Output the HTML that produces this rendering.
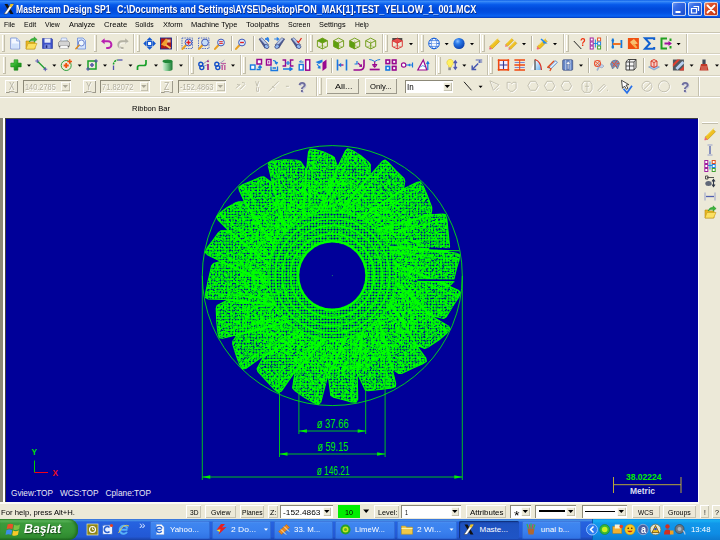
<!DOCTYPE html>
<html><head><meta charset="utf-8"><title>Mastercam Design SP1</title>
<style>
html,body{margin:0;padding:0;}
body{width:720px;height:540px;overflow:hidden;background:#ECE9D8;font-family:'Liberation Sans',sans-serif;position:relative;}
svg text{font-family:'Liberation Sans',sans-serif;}
</style></head><body>
<div style="position:absolute;left:0px;top:0px;width:720px;height:18px;background:linear-gradient(to bottom,#0A5CE6 0%,#3E8EF8 7%,#2277F5 14%,#0659EA 26%,#0049DA 50%,#0350E2 72%,#0A62F2 88%,#0856E4 94%,#0034B0 100%);"></div>
<div style="position:absolute;left:672px;top:2px;width:14px;height:14px;background:linear-gradient(135deg,#7FA8F8 0%,#3A6FE8 30%,#2458D8 70%,#1A48C0 100%);border-radius:2.5px;box-shadow:0 0 0 0.8px #E8EEFA inset;"></div>
<div style="position:absolute;left:688px;top:2px;width:14px;height:14px;background:linear-gradient(135deg,#7FA8F8 0%,#3A6FE8 30%,#2458D8 70%,#1A48C0 100%);border-radius:2.5px;box-shadow:0 0 0 0.8px #E8EEFA inset;"></div>
<div style="position:absolute;left:704px;top:2px;width:14px;height:14px;background:linear-gradient(135deg,#F0A080 0%,#E0542C 30%,#D0401C 70%,#B83010 100%);border-radius:2.5px;box-shadow:0 0 0 0.8px #E8EEFA inset;"></div>
<div style="position:absolute;left:0px;top:18px;width:720px;height:14px;background:#ECE9D8;"></div>
<div style="position:absolute;left:0px;top:32px;width:720px;height:1px;background:#C9C5B2;"></div>
<div style="position:absolute;left:0px;top:33px;width:720px;height:1px;background:#FFFFFF;"></div>
<div style="position:absolute;left:0px;top:53px;width:720px;height:1px;background:#D5D1BF;"></div>
<div style="position:absolute;left:0px;top:54px;width:720px;height:1px;background:#FFFFFF;"></div>
<div style="position:absolute;left:0px;top:75px;width:720px;height:1px;background:#D5D1BF;"></div>
<div style="position:absolute;left:0px;top:76px;width:720px;height:1px;background:#FFFFFF;"></div>
<div style="position:absolute;left:0px;top:96px;width:720px;height:1px;background:#D5D1BF;"></div>
<div style="position:absolute;left:0px;top:97px;width:720px;height:1px;background:#FFFFFF;"></div>
<div style="position:absolute;left:5px;top:80px;width:13px;height:12.5px;background:#ECE9D8;box-shadow:inset 1px 1px 0 #FFFFFF, inset -1px -1px 0 #9D9A8C, 0 0 0 0px #000;"></div>
<div style="position:absolute;left:23px;top:80px;width:48px;height:12.5px;background:#ECE9D8;box-shadow:inset 1px 1px 0 #8C8978, inset -1px -1px 0 #FFFFFF;"></div>
<div style="position:absolute;left:61px;top:81.5px;width:8.5px;height:9.5px;background:#ECE9D8;box-shadow:inset 0.8px 0.8px 0 #FFFFFF, inset -0.8px -0.8px 0 #B8B5A4;"></div>
<div style="position:absolute;left:82.5px;top:80px;width:13.200000000000003px;height:12.5px;background:#ECE9D8;box-shadow:inset 1px 1px 0 #FFFFFF, inset -1px -1px 0 #9D9A8C, 0 0 0 0px #000;"></div>
<div style="position:absolute;left:100px;top:80px;width:49.5px;height:12.5px;background:#ECE9D8;box-shadow:inset 1px 1px 0 #8C8978, inset -1px -1px 0 #FFFFFF;"></div>
<div style="position:absolute;left:139.5px;top:81.5px;width:8.5px;height:9.5px;background:#ECE9D8;box-shadow:inset 0.8px 0.8px 0 #FFFFFF, inset -0.8px -0.8px 0 #B8B5A4;"></div>
<div style="position:absolute;left:160px;top:80px;width:13px;height:12.5px;background:#ECE9D8;box-shadow:inset 1px 1px 0 #FFFFFF, inset -1px -1px 0 #9D9A8C, 0 0 0 0px #000;"></div>
<div style="position:absolute;left:177.5px;top:80px;width:48.5px;height:12.5px;background:#ECE9D8;box-shadow:inset 1px 1px 0 #8C8978, inset -1px -1px 0 #FFFFFF;"></div>
<div style="position:absolute;left:216px;top:81.5px;width:8.5px;height:9.5px;background:#ECE9D8;box-shadow:inset 0.8px 0.8px 0 #FFFFFF, inset -0.8px -0.8px 0 #B8B5A4;"></div>
<div style="position:absolute;left:326px;top:78px;width:33px;height:16px;background:#ECE9D8;box-shadow:inset 1px 1px 0 #FFFFFF, inset -1px -1px 0 #9D9A8C, 0 0 0 0px #000;"></div>
<div style="position:absolute;left:364.5px;top:78px;width:32.5px;height:16px;background:#ECE9D8;box-shadow:inset 1px 1px 0 #FFFFFF, inset -1px -1px 0 #9D9A8C, 0 0 0 0px #000;"></div>
<div style="position:absolute;left:404.5px;top:80px;width:48.5px;height:12.5px;background:#fff;box-shadow:inset 1px 1px 0 #8C8978, inset -1px -1px 0 #FFFFFF;"></div>
<div style="position:absolute;left:443px;top:81.5px;width:8.5px;height:9.5px;background:#ECE9D8;box-shadow:inset 0.8px 0.8px 0 #FFFFFF, inset -0.8px -0.8px 0 #B8B5A4;"></div>
<div style="position:absolute;left:0px;top:118px;width:3px;height:384px;background:#8A8776;"></div>
<div style="position:absolute;left:3px;top:118px;width:3px;height:384px;background:#FFFFFF;"></div>
<div style="position:absolute;left:5px;top:118px;width:694px;height:384.5px;background:#404040;"></div>
<div style="position:absolute;left:6px;top:119px;width:692px;height:383px;background:#000099;"></div>
<div style="position:absolute;left:698px;top:118px;width:1px;height:384px;background:#FFFFFF;"></div>
<div style="position:absolute;left:702px;top:122px;width:16px;height:1px;background:#FFFFFF;"></div>
<div style="position:absolute;left:702px;top:123px;width:16px;height:1px;background:#C2BEAB;"></div>
<div style="position:absolute;left:0px;top:502px;width:720px;height:17px;background:#ECE9D8;"></div>
<div style="position:absolute;left:0px;top:502px;width:699px;height:2px;background:#FBFAF4;"></div>
<div style="position:absolute;left:186px;top:505px;width:15px;height:12.5px;background:#ECE9D8;box-shadow:inset 1px 1px 0 #FFFFFF, inset -1px -1px 0 #C5C2B0;"></div>
<div style="position:absolute;left:205px;top:505px;width:31px;height:12.5px;background:#ECE9D8;box-shadow:inset 1px 1px 0 #FFFFFF, inset -1px -1px 0 #C5C2B0;"></div>
<div style="position:absolute;left:239.5px;top:505px;width:24.5px;height:12.5px;background:#ECE9D8;box-shadow:inset 1px 1px 0 #FFFFFF, inset -1px -1px 0 #C5C2B0;"></div>
<div style="position:absolute;left:267.5px;top:505px;width:10.5px;height:12.5px;background:#ECE9D8;box-shadow:inset 1px 1px 0 #FFFFFF, inset -1px -1px 0 #C5C2B0;"></div>
<div style="position:absolute;left:280px;top:505px;width:52.5px;height:12.5px;background:#fff;box-shadow:inset 1px 1px 0 #8C8978, inset -1px -1px 0 #FFFFFF;"></div>
<div style="position:absolute;left:322.5px;top:506.5px;width:8.5px;height:9.5px;background:#ECE9D8;box-shadow:inset 0.8px 0.8px 0 #FFFFFF, inset -0.8px -0.8px 0 #B8B5A4;"></div>
<div style="position:absolute;left:338px;top:505px;width:22px;height:12.5px;background:#00EE00;"></div>
<div style="position:absolute;left:373.7px;top:505px;width:25.80000000000001px;height:12.5px;background:#ECE9D8;box-shadow:inset 1px 1px 0 #FFFFFF, inset -1px -1px 0 #C5C2B0;"></div>
<div style="position:absolute;left:401px;top:505px;width:59.5px;height:12.5px;background:#fff;box-shadow:inset 1px 1px 0 #8C8978, inset -1px -1px 0 #FFFFFF;"></div>
<div style="position:absolute;left:450.5px;top:506.5px;width:8.5px;height:9.5px;background:#ECE9D8;box-shadow:inset 0.8px 0.8px 0 #FFFFFF, inset -0.8px -0.8px 0 #B8B5A4;"></div>
<div style="position:absolute;left:465.7px;top:505px;width:40.30000000000001px;height:12.5px;background:#ECE9D8;box-shadow:inset 1px 1px 0 #FFFFFF, inset -1px -1px 0 #C5C2B0;"></div>
<div style="position:absolute;left:510px;top:505px;width:21px;height:12.5px;background:#fff;box-shadow:inset 1px 1px 0 #8C8978, inset -1px -1px 0 #FFFFFF;"></div>
<div style="position:absolute;left:521px;top:506.5px;width:8.5px;height:9.5px;background:#ECE9D8;box-shadow:inset 0.8px 0.8px 0 #FFFFFF, inset -0.8px -0.8px 0 #B8B5A4;"></div>
<div style="position:absolute;left:535.3px;top:505px;width:41.10000000000002px;height:12.5px;background:#fff;box-shadow:inset 1px 1px 0 #8C8978, inset -1px -1px 0 #FFFFFF;"></div>
<div style="position:absolute;left:566.4px;top:506.5px;width:8.5px;height:9.5px;background:#ECE9D8;box-shadow:inset 0.8px 0.8px 0 #FFFFFF, inset -0.8px -0.8px 0 #B8B5A4;"></div>
<div style="position:absolute;left:538.5px;top:510.3px;width:26px;height:1.8px;background:#000;"></div>
<div style="position:absolute;left:581.7px;top:505px;width:45.299999999999955px;height:12.5px;background:#fff;box-shadow:inset 1px 1px 0 #8C8978, inset -1px -1px 0 #FFFFFF;"></div>
<div style="position:absolute;left:617px;top:506.5px;width:8.5px;height:9.5px;background:#ECE9D8;box-shadow:inset 0.8px 0.8px 0 #FFFFFF, inset -0.8px -0.8px 0 #B8B5A4;"></div>
<div style="position:absolute;left:585px;top:511px;width:30px;height:0.8px;background:#000;"></div>
<div style="position:absolute;left:632px;top:505px;width:27.700000000000045px;height:12.5px;background:#ECE9D8;box-shadow:inset 1px 1px 0 #FFFFFF, inset -1px -1px 0 #C5C2B0;"></div>
<div style="position:absolute;left:662.5px;top:505px;width:33.89999999999998px;height:12.5px;background:#ECE9D8;box-shadow:inset 1px 1px 0 #FFFFFF, inset -1px -1px 0 #C5C2B0;"></div>
<div style="position:absolute;left:700px;top:505px;width:9px;height:12.5px;background:#ECE9D8;box-shadow:inset 1px 1px 0 #FFFFFF, inset -1px -1px 0 #C5C2B0;"></div>
<div style="position:absolute;left:711.7px;top:505px;width:9.299999999999955px;height:12.5px;background:#ECE9D8;box-shadow:inset 1px 1px 0 #FFFFFF, inset -1px -1px 0 #C5C2B0;"></div>
<div style="position:absolute;left:0px;top:518.5px;width:720px;height:21.5px;background:linear-gradient(to bottom,#3168D5 0%,#4993E6 6%,#2663E0 14%,#245DDB 50%,#2258D4 85%,#1941A5 100%);"></div>
<div style="position:absolute;left:0px;top:518.5px;width:77.5px;height:21.5px;background:linear-gradient(to bottom,#2E8A2E 0%,#5CB85C 8%,#3C9A3C 20%,#379637 60%,#2F8A2F 88%,#1F6A1F 100%);border-radius:0 9px 9px 0;box-shadow:inset -2px 0 3px #1F6A1F;"></div>
<div style="position:absolute;left:150px;top:521px;width:60px;height:17.5px;background:linear-gradient(to bottom,#5A9CF5 0%,#3F86F0 12%,#3A80EE 60%,#2F72E4 100%);border-radius:2px;box-shadow:inset 0 0 0 0.6px #2A5FC8;"></div>
<div style="position:absolute;left:212px;top:521px;width:59px;height:17.5px;background:linear-gradient(to bottom,#5A9CF5 0%,#3F86F0 12%,#3A80EE 60%,#2F72E4 100%);border-radius:2px;box-shadow:inset 0 0 0 0.6px #2A5FC8;"></div>
<div style="position:absolute;left:273.7px;top:521px;width:59.30000000000001px;height:17.5px;background:linear-gradient(to bottom,#5A9CF5 0%,#3F86F0 12%,#3A80EE 60%,#2F72E4 100%);border-radius:2px;box-shadow:inset 0 0 0 0.6px #2A5FC8;"></div>
<div style="position:absolute;left:335px;top:521px;width:60px;height:17.5px;background:linear-gradient(to bottom,#5A9CF5 0%,#3F86F0 12%,#3A80EE 60%,#2F72E4 100%);border-radius:2px;box-shadow:inset 0 0 0 0.6px #2A5FC8;"></div>
<div style="position:absolute;left:397px;top:521px;width:60px;height:17.5px;background:linear-gradient(to bottom,#5A9CF5 0%,#3F86F0 12%,#3A80EE 60%,#2F72E4 100%);border-radius:2px;box-shadow:inset 0 0 0 0.6px #2A5FC8;"></div>
<div style="position:absolute;left:458.7px;top:521px;width:60.80000000000001px;height:17.5px;background:linear-gradient(to bottom,#1A49B0 0%,#1E52C0 20%,#1F55C6 100%);border-radius:2px;box-shadow:inset 1px 1px 1px #10307A;"></div>
<div style="position:absolute;left:521.5px;top:521px;width:59.5px;height:17.5px;background:linear-gradient(to bottom,#5A9CF5 0%,#3F86F0 12%,#3A80EE 60%,#2F72E4 100%);border-radius:2px;box-shadow:inset 0 0 0 0.6px #2A5FC8;"></div>
<div style="position:absolute;left:592px;top:518.5px;width:128px;height:21.5px;background:linear-gradient(to bottom,#1290E8 0%,#19B0F2 8%,#1198EA 20%,#0E8CE4 70%,#0C7AD0 100%);box-shadow:inset 1px 0 0 #0A5CB0;"></div>
<div style="position:absolute;left:2px;top:35px;width:1px;height:16px;background:#FFFFFF;"></div>
<div style="position:absolute;left:4px;top:35px;width:1px;height:16px;background:#C2BEAB;"></div>
<div style="position:absolute;left:2px;top:51px;width:3px;height:1px;background:#C2BEAB;"></div>
<div style="position:absolute;left:93.5px;top:35px;width:1px;height:16px;background:#FFFFFF;"></div>
<div style="position:absolute;left:95.5px;top:35px;width:1px;height:16px;background:#C2BEAB;"></div>
<div style="position:absolute;left:93.5px;top:51px;width:3px;height:1px;background:#C2BEAB;"></div>
<div style="position:absolute;left:133px;top:34px;width:1px;height:19px;background:#C5C1AE;"></div>
<div style="position:absolute;left:134px;top:34px;width:1px;height:19px;background:#FFFFFF;"></div>
<div style="position:absolute;left:137px;top:35px;width:1px;height:16px;background:#FFFFFF;"></div>
<div style="position:absolute;left:139px;top:35px;width:1px;height:16px;background:#C2BEAB;"></div>
<div style="position:absolute;left:137px;top:51px;width:3px;height:1px;background:#C2BEAB;"></div>
<div style="position:absolute;left:176px;top:36px;width:1px;height:15px;background:#B8B4A2;"></div>
<div style="position:absolute;left:177px;top:36px;width:1px;height:15px;background:#FFFFFF;"></div>
<div style="position:absolute;left:230.5px;top:36px;width:1px;height:15px;background:#B8B4A2;"></div>
<div style="position:absolute;left:231.5px;top:36px;width:1px;height:15px;background:#FFFFFF;"></div>
<div style="position:absolute;left:252.5px;top:36px;width:1px;height:15px;background:#B8B4A2;"></div>
<div style="position:absolute;left:253.5px;top:36px;width:1px;height:15px;background:#FFFFFF;"></div>
<div style="position:absolute;left:306px;top:34px;width:1px;height:19px;background:#C5C1AE;"></div>
<div style="position:absolute;left:307px;top:34px;width:1px;height:19px;background:#FFFFFF;"></div>
<div style="position:absolute;left:309.5px;top:35px;width:1px;height:16px;background:#FFFFFF;"></div>
<div style="position:absolute;left:311.5px;top:35px;width:1px;height:16px;background:#C2BEAB;"></div>
<div style="position:absolute;left:309.5px;top:51px;width:3px;height:1px;background:#C2BEAB;"></div>
<div style="position:absolute;left:382px;top:34px;width:1px;height:19px;background:#C5C1AE;"></div>
<div style="position:absolute;left:383px;top:34px;width:1px;height:19px;background:#FFFFFF;"></div>
<div style="position:absolute;left:385px;top:35px;width:1px;height:16px;background:#FFFFFF;"></div>
<div style="position:absolute;left:387px;top:35px;width:1px;height:16px;background:#C2BEAB;"></div>
<div style="position:absolute;left:385px;top:51px;width:3px;height:1px;background:#C2BEAB;"></div>
<div style="position:absolute;left:417px;top:34px;width:1px;height:19px;background:#C5C1AE;"></div>
<div style="position:absolute;left:418px;top:34px;width:1px;height:19px;background:#FFFFFF;"></div>
<div style="position:absolute;left:420.5px;top:35px;width:1px;height:16px;background:#FFFFFF;"></div>
<div style="position:absolute;left:422.5px;top:35px;width:1px;height:16px;background:#C2BEAB;"></div>
<div style="position:absolute;left:420.5px;top:51px;width:3px;height:1px;background:#C2BEAB;"></div>
<div style="position:absolute;left:479px;top:34px;width:1px;height:19px;background:#C5C1AE;"></div>
<div style="position:absolute;left:480px;top:34px;width:1px;height:19px;background:#FFFFFF;"></div>
<div style="position:absolute;left:482px;top:35px;width:1px;height:16px;background:#FFFFFF;"></div>
<div style="position:absolute;left:484px;top:35px;width:1px;height:16px;background:#C2BEAB;"></div>
<div style="position:absolute;left:482px;top:51px;width:3px;height:1px;background:#C2BEAB;"></div>
<div style="position:absolute;left:531px;top:36px;width:1px;height:15px;background:#B8B4A2;"></div>
<div style="position:absolute;left:532px;top:36px;width:1px;height:15px;background:#FFFFFF;"></div>
<div style="position:absolute;left:562.5px;top:34px;width:1px;height:19px;background:#C5C1AE;"></div>
<div style="position:absolute;left:563.5px;top:34px;width:1px;height:19px;background:#FFFFFF;"></div>
<div style="position:absolute;left:566px;top:35px;width:1px;height:16px;background:#FFFFFF;"></div>
<div style="position:absolute;left:568px;top:35px;width:1px;height:16px;background:#C2BEAB;"></div>
<div style="position:absolute;left:566px;top:51px;width:3px;height:1px;background:#C2BEAB;"></div>
<div style="position:absolute;left:606px;top:36px;width:1px;height:15px;background:#B8B4A2;"></div>
<div style="position:absolute;left:607px;top:36px;width:1px;height:15px;background:#FFFFFF;"></div>
<div style="position:absolute;left:685.5px;top:34px;width:1px;height:19px;background:#C5C1AE;"></div>
<div style="position:absolute;left:686.5px;top:34px;width:1px;height:19px;background:#FFFFFF;"></div>
<div style="position:absolute;left:2.5px;top:56.5px;width:1px;height:16px;background:#FFFFFF;"></div>
<div style="position:absolute;left:4.5px;top:56.5px;width:1px;height:16px;background:#C2BEAB;"></div>
<div style="position:absolute;left:2.5px;top:72.5px;width:3px;height:1px;background:#C2BEAB;"></div>
<div style="position:absolute;left:187.5px;top:55px;width:1px;height:20px;background:#C5C1AE;"></div>
<div style="position:absolute;left:188.5px;top:55px;width:1px;height:20px;background:#FFFFFF;"></div>
<div style="position:absolute;left:190.5px;top:56.5px;width:1px;height:16px;background:#FFFFFF;"></div>
<div style="position:absolute;left:192.5px;top:56.5px;width:1px;height:16px;background:#C2BEAB;"></div>
<div style="position:absolute;left:190.5px;top:72.5px;width:3px;height:1px;background:#C2BEAB;"></div>
<div style="position:absolute;left:239.5px;top:55px;width:1px;height:20px;background:#C5C1AE;"></div>
<div style="position:absolute;left:240.5px;top:55px;width:1px;height:20px;background:#FFFFFF;"></div>
<div style="position:absolute;left:242.5px;top:56.5px;width:1px;height:16px;background:#FFFFFF;"></div>
<div style="position:absolute;left:244.5px;top:56.5px;width:1px;height:16px;background:#C2BEAB;"></div>
<div style="position:absolute;left:242.5px;top:72.5px;width:3px;height:1px;background:#C2BEAB;"></div>
<div style="position:absolute;left:331px;top:57.5px;width:1px;height:15px;background:#B8B4A2;"></div>
<div style="position:absolute;left:332px;top:57.5px;width:1px;height:15px;background:#FFFFFF;"></div>
<div style="position:absolute;left:435px;top:55px;width:1px;height:20px;background:#C5C1AE;"></div>
<div style="position:absolute;left:436px;top:55px;width:1px;height:20px;background:#FFFFFF;"></div>
<div style="position:absolute;left:438px;top:56.5px;width:1px;height:16px;background:#FFFFFF;"></div>
<div style="position:absolute;left:440px;top:56.5px;width:1px;height:16px;background:#C2BEAB;"></div>
<div style="position:absolute;left:438px;top:72.5px;width:3px;height:1px;background:#C2BEAB;"></div>
<div style="position:absolute;left:487px;top:55px;width:1px;height:20px;background:#C5C1AE;"></div>
<div style="position:absolute;left:488px;top:55px;width:1px;height:20px;background:#FFFFFF;"></div>
<div style="position:absolute;left:490px;top:56.5px;width:1px;height:16px;background:#FFFFFF;"></div>
<div style="position:absolute;left:492px;top:56.5px;width:1px;height:16px;background:#C2BEAB;"></div>
<div style="position:absolute;left:490px;top:72.5px;width:3px;height:1px;background:#C2BEAB;"></div>
<div style="position:absolute;left:588px;top:57.5px;width:1px;height:15px;background:#B8B4A2;"></div>
<div style="position:absolute;left:589px;top:57.5px;width:1px;height:15px;background:#FFFFFF;"></div>
<div style="position:absolute;left:642.5px;top:57.5px;width:1px;height:15px;background:#B8B4A2;"></div>
<div style="position:absolute;left:643.5px;top:57.5px;width:1px;height:15px;background:#FFFFFF;"></div>
<div style="position:absolute;left:316px;top:77px;width:1px;height:19px;background:#C5C1AE;"></div>
<div style="position:absolute;left:317px;top:77px;width:1px;height:19px;background:#FFFFFF;"></div>
<div style="position:absolute;left:319px;top:78px;width:1px;height:16px;background:#FFFFFF;"></div>
<div style="position:absolute;left:321px;top:78px;width:1px;height:16px;background:#C2BEAB;"></div>
<div style="position:absolute;left:319px;top:94px;width:3px;height:1px;background:#C2BEAB;"></div>
<div style="position:absolute;left:698px;top:77px;width:1px;height:19px;background:#C5C1AE;"></div>
<div style="position:absolute;left:699px;top:77px;width:1px;height:19px;background:#FFFFFF;"></div>
<svg style="position:absolute;left:0;top:0" width="720" height="540" viewBox="0 0 720 540">
<g transform="translate(3,3)"><path d="M1.5 1 L4.5 1 L10.5 11 L7.5 11 Z" fill="#111"/><path d="M8 1 L11 1 L4 11 L1 11 Z" fill="#fff" stroke="#333" stroke-width="0.5"/><path d="M7.5 1 L10.5 1 L8.2 4.5 L6.5 3 Z" fill="#E8C020"/></g>
<rect x="675.5" y="11" width="5" height="2" fill="#fff"/>
<path d="M693.5 6.5 h5 v4.5 M691.5 8.5 h5 v4.5 h-5 z" fill="none" stroke="#fff" stroke-width="1.2"/>
<path d="M707.5 5.5 l7 7 M714.5 5.5 l-7 7" stroke="#fff" stroke-width="1.8" stroke-linecap="round"/>
<path d="M62.6 85.05 h5.4 l-2.7 3 z" fill="#A8A596"/>
<path d="M141.1 85.05 h5.4 l-2.7 3 z" fill="#A8A596"/>
<path d="M217.6 85.05 h5.4 l-2.7 3 z" fill="#A8A596"/>
<path d="M444.6 85.05 h5.4 l-2.7 3 z" fill="#000"/>
<path d="M324.1 510.05 h5.4 l-2.7 3 z" fill="#000"/>
<path d="M363.2 509.5 h6 l-3 3.4 z" fill="#000"/>
<path d="M452.1 510.05 h5.4 l-2.7 3 z" fill="#000"/>
<path d="M522.6 510.05 h5.4 l-2.7 3 z" fill="#000"/>
<path d="M568.0 510.05 h5.4 l-2.7 3 z" fill="#000"/>
<path d="M618.6 510.05 h5.4 l-2.7 3 z" fill="#000"/>
<g transform="translate(7,522.8) scale(1.15)"><path d="M0.5 1.5 q2.5 -1.5 5 0 l-0.8 4 q-2.5 -1.3 -5 0z" fill="#E8502A"/><path d="M6.3 1.8 q2.5 1.2 5 -0.3 l-0.8 4 q-2.5 1.5 -5 0.3z" fill="#7CC242"/><path d="M-0.5 6.5 q2.5 -1.5 5 0 l-0.8 4 q-2.5 -1.3 -5 0z" fill="#3C8DE8"/><path d="M5.3 6.8 q2.5 1.2 5 -0.3 l-0.8 4 q-2.5 1.5 -5 0.3z" fill="#F8C828"/></g>
<defs>
<pattern id="m1" width="3" height="3" patternUnits="userSpaceOnUse"><rect width="3" height="3" fill="#00FF00"/><circle cx="1.5" cy="1.5" r="1.08" fill="#000099" fill-opacity="0.9"/></pattern>
<pattern id="m2" width="3" height="3" patternUnits="userSpaceOnUse"><rect width="3" height="3" fill="#00FF00"/><circle cx="1.5" cy="1.5" r="1.05" fill="#000099"/></pattern>
<pattern id="m3" width="3" height="3" patternUnits="userSpaceOnUse" patternTransform="rotate(30)"><rect width="3" height="3" fill="#00FF00"/><circle cx="1.5" cy="1.5" r="0.6" fill="#000099"/></pattern>
<pattern id="m4" width="3.7" height="3.7" patternUnits="userSpaceOnUse" patternTransform="rotate(23)"><circle cx="1.8" cy="1.8" r="1.0" fill="#00FF00"/></pattern>
<filter id="gn" filterUnits="userSpaceOnUse" x="195" y="138" width="280" height="280" color-interpolation-filters="sRGB">
<feTurbulence type="fractalNoise" baseFrequency="0.42" numOctaves="2" seed="4" result="n"/>
<feColorMatrix in="n" type="matrix" values="0 0 0 0 0  0 0 0 0 1  0 0 0 0 0  9 0 0 0 -4.3" result="g"/>
<feComposite in="g" in2="SourceAlpha" operator="in"/>
</filter>
<filter id="gn3" filterUnits="userSpaceOnUse" x="195" y="138" width="280" height="280" color-interpolation-filters="sRGB">
<feTurbulence type="fractalNoise" baseFrequency="0.36" numOctaves="2" seed="21" result="n"/>
<feColorMatrix in="n" type="matrix" values="0 0 0 0 0  0 0 0 0 1  0 0 0 0 0  0 0 9 0 -4.6" result="g"/>
<feComposite in="g" in2="SourceAlpha" operator="in"/>
</filter>
<filter id="gn2" filterUnits="userSpaceOnUse" x="195" y="138" width="280" height="280" color-interpolation-filters="sRGB">
<feTurbulence type="fractalNoise" baseFrequency="0.5" numOctaves="2" seed="9" result="n"/>
<feColorMatrix in="n" type="matrix" values="0 0 0 0 0  0 0 0 0 1  0 0 0 0 0  0 9 0 0 -4.9" result="g"/>
<feComposite in="g" in2="SourceAlpha" operator="in"/>
</filter>
<filter id="bn" filterUnits="userSpaceOnUse" x="195" y="138" width="280" height="280" color-interpolation-filters="sRGB">
<feTurbulence type="fractalNoise" baseFrequency="0.47" numOctaves="2" seed="11" result="n"/>
<feColorMatrix in="n" type="matrix" values="0 0 0 0 0  0 0 0 0 0  0 0 0 0 0.6  10 0 0 0 -6.4" result="g"/>
<feComposite in="g" in2="SourceAlpha" operator="in"/>
</filter>
<pattern id="m5" width="3" height="3" patternUnits="userSpaceOnUse"><circle cx="1.5" cy="1.5" r="0.62" fill="#000099"/></pattern>
<clipPath id="cv"><rect x="6" y="119" width="692" height="383"/></clipPath>
</defs>
<g clip-path="url(#cv)">
<path d="M430.9 214.7 L431.7 210.3 L431.7 207.3 L427.2 195.5 L423.2 186.0 L420.3 181.9 L417.2 182.3 L403.4 189.1 L404.8 181.4 L403.9 178.5 L395.8 170.7 L388.9 163.0 L385.0 160.0 L382.1 161.5 L370.2 175.3 L370.3 164.6 L368.5 162.2 L360.5 155.5 L352.4 150.4 L347.7 148.7 L345.4 151.0 L337.7 167.1 L334.2 157.5 L331.7 155.8 L323.7 152.0 L315.0 149.5 L310.0 149.2 L308.5 152.1 L306.5 170.4 L300.4 161.4 L297.5 160.4 L284.6 159.7 L273.7 161.0 L268.8 162.5 L268.3 165.7 L272.5 183.3 L264.0 176.9 L260.9 177.0 L251.7 181.0 L243.0 184.4 L238.8 187.2 L239.3 190.3 L244.5 201.9 L239.0 201.7 L236.2 202.6 L226.9 207.8 L219.8 213.0 L216.6 216.9 L218.0 219.8 L228.7 230.5 L221.0 230.8 L218.5 232.6 L212.6 240.7 L207.3 247.7 L205.3 252.3 L207.4 254.7 L221.2 261.4 L213.5 263.5 L211.6 265.9 L208.1 281.1 L205.7 292.5 L205.5 297.5 L208.3 299.0 L229.0 299.6 L217.1 305.6 L216.2 308.5 L216.8 322.2 L217.9 332.9 L219.3 337.7 L222.5 338.2 L237.2 334.8 L232.8 341.2 L232.8 344.3 L236.4 355.9 L239.7 364.7 L242.5 368.9 L245.7 368.5 L264.1 355.4 L257.1 368.8 L258.0 371.7 L267.2 381.5 L274.5 389.5 L278.5 392.5 L281.4 391.1 L295.2 371.3 L292.6 387.8 L294.4 390.2 L304.7 397.6 L313.8 402.8 L318.5 404.4 L320.8 402.1 L328.1 374.1 L330.8 395.4 L333.4 397.1 L342.5 399.5 L351.2 401.9 L356.2 402.1 L357.7 399.2 L357.2 373.1 L365.3 389.9 L368.2 390.8 L380.0 389.4 L390.5 388.3 L395.2 386.8 L395.7 383.7 L392.2 369.1 L398.5 373.4 L401.5 373.4 L413.2 368.0 L422.3 364.1 L426.4 361.2 L425.8 358.1 L415.9 344.7 L424.5 348.4 L427.4 347.5 L439.5 339.5 L446.9 333.0 L450.0 329.0 L448.5 326.1 L430.5 315.4 L443.9 318.4 L446.3 316.7 L453.6 304.8 L458.7 297.2 L460.4 292.5 L458.2 290.2 L448.8 286.1 L451.5 284.1 L453.3 281.7 L456.5 268.4 L459.1 259.8 L459.4 254.8 L456.6 253.2 L447.9 251.8 L448.5 249.4 L449.6 246.6 L447.9 230.1 L446.9 219.5 L445.5 214.6 L442.4 214.1 Z" fill="url(#m1)" stroke="#00FF00" stroke-width="1.1" stroke-linejoin="round"/>
<path d="M430.9 214.7 L431.7 210.3 L431.7 207.3 L427.2 195.5 L423.2 186.0 L420.3 181.9 L417.2 182.3 L403.4 189.1 L404.8 181.4 L403.9 178.5 L395.8 170.7 L388.9 163.0 L385.0 160.0 L382.1 161.5 L370.2 175.3 L370.3 164.6 L368.5 162.2 L360.5 155.5 L352.4 150.4 L347.7 148.7 L345.4 151.0 L337.7 167.1 L334.2 157.5 L331.7 155.8 L323.7 152.0 L315.0 149.5 L310.0 149.2 L308.5 152.1 L306.5 170.4 L300.4 161.4 L297.5 160.4 L284.6 159.7 L273.7 161.0 L268.8 162.5 L268.3 165.7 L272.5 183.3 L264.0 176.9 L260.9 177.0 L251.7 181.0 L243.0 184.4 L238.8 187.2 L239.3 190.3 L244.5 201.9 L239.0 201.7 L236.2 202.6 L226.9 207.8 L219.8 213.0 L216.6 216.9 L218.0 219.8 L228.7 230.5 L221.0 230.8 L218.5 232.6 L212.6 240.7 L207.3 247.7 L205.3 252.3 L207.4 254.7 L221.2 261.4 L213.5 263.5 L211.6 265.9 L208.1 281.1 L205.7 292.5 L205.5 297.5 L208.3 299.0 L229.0 299.6 L217.1 305.6 L216.2 308.5 L216.8 322.2 L217.9 332.9 L219.3 337.7 L222.5 338.2 L237.2 334.8 L232.8 341.2 L232.8 344.3 L236.4 355.9 L239.7 364.7 L242.5 368.9 L245.7 368.5 L264.1 355.4 L257.1 368.8 L258.0 371.7 L267.2 381.5 L274.5 389.5 L278.5 392.5 L281.4 391.1 L295.2 371.3 L292.6 387.8 L294.4 390.2 L304.7 397.6 L313.8 402.8 L318.5 404.4 L320.8 402.1 L328.1 374.1 L330.8 395.4 L333.4 397.1 L342.5 399.5 L351.2 401.9 L356.2 402.1 L357.7 399.2 L357.2 373.1 L365.3 389.9 L368.2 390.8 L380.0 389.4 L390.5 388.3 L395.2 386.8 L395.7 383.7 L392.2 369.1 L398.5 373.4 L401.5 373.4 L413.2 368.0 L422.3 364.1 L426.4 361.2 L425.8 358.1 L415.9 344.7 L424.5 348.4 L427.4 347.5 L439.5 339.5 L446.9 333.0 L450.0 329.0 L448.5 326.1 L430.5 315.4 L443.9 318.4 L446.3 316.7 L453.6 304.8 L458.7 297.2 L460.4 292.5 L458.2 290.2 L448.8 286.1 L451.5 284.1 L453.3 281.7 L456.5 268.4 L459.1 259.8 L459.4 254.8 L456.6 253.2 L447.9 251.8 L448.5 249.4 L449.6 246.6 L447.9 230.1 L446.9 219.5 L445.5 214.6 L442.4 214.1 Z" fill="#000" filter="url(#gn)"/>
<path d="M430.9 214.7 L431.7 210.3 L431.7 207.3 L427.2 195.5 L423.2 186.0 L420.3 181.9 L417.2 182.3 L403.4 189.1 L404.8 181.4 L403.9 178.5 L395.8 170.7 L388.9 163.0 L385.0 160.0 L382.1 161.5 L370.2 175.3 L370.3 164.6 L368.5 162.2 L360.5 155.5 L352.4 150.4 L347.7 148.7 L345.4 151.0 L337.7 167.1 L334.2 157.5 L331.7 155.8 L323.7 152.0 L315.0 149.5 L310.0 149.2 L308.5 152.1 L306.5 170.4 L300.4 161.4 L297.5 160.4 L284.6 159.7 L273.7 161.0 L268.8 162.5 L268.3 165.7 L272.5 183.3 L264.0 176.9 L260.9 177.0 L251.7 181.0 L243.0 184.4 L238.8 187.2 L239.3 190.3 L244.5 201.9 L239.0 201.7 L236.2 202.6 L226.9 207.8 L219.8 213.0 L216.6 216.9 L218.0 219.8 L228.7 230.5 L221.0 230.8 L218.5 232.6 L212.6 240.7 L207.3 247.7 L205.3 252.3 L207.4 254.7 L221.2 261.4 L213.5 263.5 L211.6 265.9 L208.1 281.1 L205.7 292.5 L205.5 297.5 L208.3 299.0 L229.0 299.6 L217.1 305.6 L216.2 308.5 L216.8 322.2 L217.9 332.9 L219.3 337.7 L222.5 338.2 L237.2 334.8 L232.8 341.2 L232.8 344.3 L236.4 355.9 L239.7 364.7 L242.5 368.9 L245.7 368.5 L264.1 355.4 L257.1 368.8 L258.0 371.7 L267.2 381.5 L274.5 389.5 L278.5 392.5 L281.4 391.1 L295.2 371.3 L292.6 387.8 L294.4 390.2 L304.7 397.6 L313.8 402.8 L318.5 404.4 L320.8 402.1 L328.1 374.1 L330.8 395.4 L333.4 397.1 L342.5 399.5 L351.2 401.9 L356.2 402.1 L357.7 399.2 L357.2 373.1 L365.3 389.9 L368.2 390.8 L380.0 389.4 L390.5 388.3 L395.2 386.8 L395.7 383.7 L392.2 369.1 L398.5 373.4 L401.5 373.4 L413.2 368.0 L422.3 364.1 L426.4 361.2 L425.8 358.1 L415.9 344.7 L424.5 348.4 L427.4 347.5 L439.5 339.5 L446.9 333.0 L450.0 329.0 L448.5 326.1 L430.5 315.4 L443.9 318.4 L446.3 316.7 L453.6 304.8 L458.7 297.2 L460.4 292.5 L458.2 290.2 L448.8 286.1 L451.5 284.1 L453.3 281.7 L456.5 268.4 L459.1 259.8 L459.4 254.8 L456.6 253.2 L447.9 251.8 L448.5 249.4 L449.6 246.6 L447.9 230.1 L446.9 219.5 L445.5 214.6 L442.4 214.1 Z" fill="#000" filter="url(#bn)" opacity="0.8"/>
<circle cx="332.3" cy="275.6" r="80" fill="none" stroke="#000" stroke-width="34" filter="url(#gn3)"/>
<path d="M403.4 189.1 Q379.6 205.0 354.8 222.1" fill="none" stroke="#00FF00" stroke-width="2.2"/>
<path d="M422.5 186.3 Q389.9 206.5 361.2 223.0" fill="none" stroke="#00FF00" stroke-width="1.2"/>
<path d="M370.2 175.3 Q354.4 193.5 336.4 217.7" fill="none" stroke="#00FF00" stroke-width="2.2"/>
<path d="M388.4 163.6 Q364.7 191.6 342.8 216.5" fill="none" stroke="#00FF00" stroke-width="1.2"/>
<path d="M337.7 167.1 Q328.6 190.7 318.8 219.2" fill="none" stroke="#00FF00" stroke-width="2.2"/>
<path d="M352.0 151.1 Q337.8 185.8 324.5 216.1" fill="none" stroke="#00FF00" stroke-width="1.2"/>
<path d="M306.5 170.4 Q304.1 195.4 303.0 225.6" fill="none" stroke="#00FF00" stroke-width="2.2"/>
<path d="M314.9 150.2 Q311.4 188.1 307.5 221.0" fill="none" stroke="#00FF00" stroke-width="1.2"/>
<path d="M272.5 183.3 Q279.2 209.3 288.1 238.1" fill="none" stroke="#00FF00" stroke-width="2.2"/>
<path d="M273.8 161.8 Q283.7 199.9 290.8 232.2" fill="none" stroke="#00FF00" stroke-width="1.2"/>
<path d="M244.5 201.9 Q261.8 228.1 278.9 252.9" fill="none" stroke="#00FF00" stroke-width="2.2"/>
<path d="M243.3 185.0 Q263.4 217.7 279.8 246.5" fill="none" stroke="#00FF00" stroke-width="1.2"/>
<path d="M228.7 230.5 Q251.2 250.0 274.7 269.0" fill="none" stroke="#00FF00" stroke-width="2.2"/>
<path d="M220.3 213.5 Q249.8 239.7 273.7 262.6" fill="none" stroke="#00FF00" stroke-width="1.2"/>
<path d="M221.2 261.4 Q247.3 274.1 275.2 285.7" fill="none" stroke="#00FF00" stroke-width="2.2"/>
<path d="M207.9 248.0 Q243.0 264.6 272.4 279.8" fill="none" stroke="#00FF00" stroke-width="1.2"/>
<path d="M229.0 299.6 Q252.0 303.6 282.2 304.8" fill="none" stroke="#00FF00" stroke-width="2.2"/>
<path d="M206.4 292.6 Q244.7 296.2 277.6 300.2" fill="none" stroke="#00FF00" stroke-width="1.2"/>
<path d="M237.2 334.8 Q265.5 328.2 294.4 319.5" fill="none" stroke="#00FF00" stroke-width="2.2"/>
<path d="M218.7 332.8 Q256.1 323.6 288.6 316.7" fill="none" stroke="#00FF00" stroke-width="1.2"/>
<path d="M264.1 355.4 Q284.2 345.7 309.2 328.8" fill="none" stroke="#00FF00" stroke-width="2.2"/>
<path d="M240.4 364.4 Q273.8 344.0 302.8 327.8" fill="none" stroke="#00FF00" stroke-width="1.2"/>
<path d="M295.2 371.3 Q309.9 357.6 328.0 333.4" fill="none" stroke="#00FF00" stroke-width="2.2"/>
<path d="M275.0 389.0 Q299.6 359.5 321.6 334.6" fill="none" stroke="#00FF00" stroke-width="1.2"/>
<path d="M328.1 374.1 Q337.2 360.5 346.6 331.8" fill="none" stroke="#00FF00" stroke-width="2.2"/>
<path d="M314.1 402.1 Q328.1 365.5 341.0 335.0" fill="none" stroke="#00FF00" stroke-width="1.2"/>
<path d="M357.2 373.1 Q361.5 355.4 362.3 325.3" fill="none" stroke="#00FF00" stroke-width="2.2"/>
<path d="M351.3 401.2 Q354.2 362.9 357.8 329.9" fill="none" stroke="#00FF00" stroke-width="1.2"/>
<path d="M392.2 369.1 Q385.7 341.8 376.7 313.0" fill="none" stroke="#00FF00" stroke-width="2.2"/>
<path d="M390.3 387.6 Q381.2 351.2 373.9 318.8" fill="none" stroke="#00FF00" stroke-width="1.2"/>
<path d="M415.9 344.7 Q403.7 321.8 386.1 297.2" fill="none" stroke="#00FF00" stroke-width="2.2"/>
<path d="M422.0 363.4 Q402.3 332.1 385.3 303.7" fill="none" stroke="#00FF00" stroke-width="1.2"/>
<path d="M430.5 315.4 Q414.4 297.6 390.2 279.6" fill="none" stroke="#00FF00" stroke-width="2.2"/>
<path d="M446.4 332.5 Q416.3 307.9 391.4 286.0" fill="none" stroke="#00FF00" stroke-width="1.2"/>
<path d="M448.8 286.1 Q417.3 272.8 388.8 262.7" fill="none" stroke="#00FF00" stroke-width="2.2"/>
<path d="M458.0 296.9 Q422.1 282.0 391.9 268.4" fill="none" stroke="#00FF00" stroke-width="1.2"/>
<path d="M447.9 251.8 Q412.8 248.3 382.7 246.9" fill="none" stroke="#00FF00" stroke-width="2.2"/>
<path d="M458.4 259.7 Q420.1 255.8 387.2 251.5" fill="none" stroke="#00FF00" stroke-width="1.2"/>
<path d="M430.9 214.7 Q399.6 223.6 370.6 232.0" fill="none" stroke="#00FF00" stroke-width="2.2"/>
<path d="M446.2 219.6 Q408.9 228.3 376.4 234.9" fill="none" stroke="#00FF00" stroke-width="1.2"/>
<path d="M459.5 249.3 L430 248.7 M454.5 280.3 L418 280" stroke="#000099" stroke-width="1.7" stroke-linecap="round" fill="none"/>
<path d="M459.5 250.8 L430 250.2 M454.5 281.8 L418 281.5" stroke="#00FF00" stroke-width="1" fill="none"/>
<circle cx="332.3" cy="275.6" r="48.5" fill="none" stroke="url(#m2)" stroke-width="31"/>
<circle cx="332.3" cy="275.6" r="48.5" fill="none" stroke="#000" stroke-width="31" filter="url(#gn2)"/>
<circle cx="332.3" cy="275.6" r="34.3" fill="none" stroke="#00FF00" stroke-width="2.6"/>
<circle cx="332.3" cy="275.6" r="41.8" fill="none" stroke="#00FF00" stroke-width="1.8"/>
<circle cx="332.3" cy="275.6" r="50" fill="none" stroke="#00FF00" stroke-width="1.6"/>
<circle cx="332.3" cy="275.6" r="57.2" fill="none" stroke="#00FF00" stroke-width="1.8"/>
<circle cx="332.3" cy="275.6" r="63.5" fill="none" stroke="#00FF00" stroke-width="1.2"/>
<circle cx="332.3" cy="275.6" r="33" fill="#000099"/>
<rect x="331.90000000000003" y="275.20000000000005" width="0.9" height="0.9" fill="#20A060"/>
<circle cx="332.3" cy="275.6" r="130" fill="none" stroke="#00FF00" stroke-width="0.8"/>
<path d="M298.90000000000003 360 V434" stroke="#00F000" stroke-width="0.8" fill="none"/>
<path d="M365.7 360 V434" stroke="#00F000" stroke-width="0.8" fill="none"/>
<path d="M279.5 368 V457" stroke="#00F000" stroke-width="0.8" fill="none"/>
<path d="M385.1 368 V457" stroke="#00F000" stroke-width="0.8" fill="none"/>
<path d="M202.3 275.6 V480" stroke="#00F000" stroke-width="0.8" fill="none"/>
<path d="M462.3 275.6 V480" stroke="#00F000" stroke-width="0.8" fill="none"/>
<path d="M298.90000000000003 431 H365.7" stroke="#00F000" stroke-width="0.8" fill="none"/>
<path d="M298.90000000000003 431 l8 -1.7 v3.4z M365.7 431 l-8 -1.7 v3.4z" fill="#00F000"/>
<path d="M279.5 454 H385.1" stroke="#00F000" stroke-width="0.8" fill="none"/>
<path d="M279.5 454 l8 -1.7 v3.4z M385.1 454 l-8 -1.7 v3.4z" fill="#00F000"/>
<path d="M202.3 477 H462.3" stroke="#00F000" stroke-width="0.8" fill="none"/>
<path d="M202.3 477 l8 -1.7 v3.4z M462.3 477 l-8 -1.7 v3.4z" fill="#00F000"/>
<text x="316.7" y="428.3" font-size="13" fill="#00F000" textLength="32.0" lengthAdjust="spacingAndGlyphs" style="font-weight:normal" stroke="#000099" stroke-width="0.35" paint-order="stroke">ø 37.66</text>
<text x="317.5" y="451.3" font-size="13" fill="#00F000" textLength="30.69999999999999" lengthAdjust="spacingAndGlyphs" style="font-weight:normal" stroke="#000099" stroke-width="0.35" paint-order="stroke">ø 59.15</text>
<text x="316.7" y="474.6" font-size="13" fill="#00F000" textLength="32.900000000000034" lengthAdjust="spacingAndGlyphs" style="font-weight:normal" stroke="#000099" stroke-width="0.35" paint-order="stroke">ø 146.21</text>
<path d="M34.5 460.5 V472.5" stroke="#00D000" stroke-width="1" fill="none"/><path d="M34.5 472.5 H48" stroke="#F00018" stroke-width="1" fill="none"/>
<text x="31.5" y="454.8" font-size="8.5" font-weight="bold" fill="#00E000" textLength="5.5" lengthAdjust="spacingAndGlyphs">Y</text>
<text x="52.5" y="476" font-size="8.5" font-weight="bold" fill="#F01020" textLength="5.5" lengthAdjust="spacingAndGlyphs">X</text>
<text x="11" y="495.5" font-size="9" fill="#E8E8F4" textLength="42" lengthAdjust="spacingAndGlyphs">Gview:TOP</text>
<text x="60" y="495.5" font-size="9" fill="#E8E8F4" textLength="38.5" lengthAdjust="spacingAndGlyphs">WCS:TOP</text>
<text x="105.5" y="495.5" font-size="9" fill="#E8E8F4" textLength="45.5" lengthAdjust="spacingAndGlyphs">Cplane:TOP</text>
<path d="M613.5 477 V493 M681 477 V493 M613.5 484.7 H681" stroke="#B8A838" stroke-width="1" fill="none"/>
<text x="626" y="479.6" font-size="8.5" font-weight="bold" fill="#00F000" textLength="35.5" lengthAdjust="spacingAndGlyphs">38.02224</text>
<text x="630" y="493.8" font-size="8.5" font-weight="bold" fill="#D8DCF0" textLength="25" lengthAdjust="spacingAndGlyphs">Metric</text>
</g>
<g transform="translate(15.2,43.5)"><path d="M-4.5 -5.5 h6 l3 3 v8 h-9z" fill="#F4F8FF" stroke="#7A96D8" stroke-width="0.9"/><path d="M-3.5 0 h7 v4.5 h-7z" fill="#C8DCFA" opacity="0.8"/><path d="M1.5 -5.5 v3 h3" fill="#DCE8FC" stroke="#7A96D8" stroke-width="0.7"/></g>
<g transform="translate(31,43.5)"><path d="M-5 -2.5 h3 l1 1 h5 v7 h-9z" fill="#E8B820" stroke="#B88A10" stroke-width="0.6"/><path d="M-5 5.5 l2 -5.5 h9 l-2.5 5.5z" fill="#FCE060" stroke="#C89A18" stroke-width="0.6"/><path d="M-2 -1.5 q1.5 -4 5 -3.6 l0 -1.6 l3.2 2.8 l-3.2 2.6 l0 -1.6 q-3 -0.3 -5 1.4z" fill="#3CB43C" stroke="#1E8A1E" stroke-width="0.4"/></g>
<g transform="translate(47.5,43.5)"><path d="M-5 -5 h9.2 l0.8 0.8 v9.2 h-10z" fill="#3C50C8" stroke="#283898" stroke-width="0.6"/><rect x="-3" y="-5" width="6" height="4.2" fill="#E8ECFA"/><rect x="-3" y="1" width="6" height="4" fill="#8090E0"/><rect x="-1.8" y="1.8" width="1.6" height="2.6" fill="#202878"/></g>
<g transform="translate(64,43.5)"><path d="M-2.5 -5.5 h5 l1 4 h-7z" fill="#E8F0FF" stroke="#8098D0" stroke-width="0.6"/><path d="M-5.5 -1 l1.5 -1.5 h8 l1.5 1.5 v3.5 h-11z" fill="#D4D4D4" stroke="#707070" stroke-width="0.6"/><path d="M-5.5 2.5 h11 l-1.5 2 h-8z" fill="#505050"/><path d="M-3.5 2 h7 l1 3 h-9z" fill="#F8F8F8" stroke="#888" stroke-width="0.4"/></g>
<g transform="translate(80.5,43.5)"><path d="M-3 -5.5 h5.5 l2.5 2.5 v8.5 h-8z" fill="#D4E4FC" stroke="#6A8AD8" stroke-width="0.8"/><circle cx="0.8" cy="-0.5" r="3" fill="#F0F8FF" stroke="#6078C8" stroke-width="0.9"/><path d="M-1.4 1.8 l-3.2 3.4" stroke="#D88A20" stroke-width="1.6" stroke-linecap="round"/></g>
<g transform="translate(107,43.5)"><path d="M-3.5 -2.2 h4.5 a3.4 3.4 0 0 1 0 6.8 h-1.8" fill="none" stroke="#B820B0" stroke-width="2"/><path d="M-6 -2.2 l3.6 -3 v6z" fill="#B820B0"/></g>
<g transform="translate(122.7,43.5)"><path d="M3.5 -2.2 h-4.5 a3.4 3.4 0 0 0 0 6.8 h1.8" fill="none" stroke="#B4B2A4" stroke-width="2"/><path d="M6 -2.2 l-3.6 -3 v6z" fill="#B4B2A4"/><path d="M4 -1.2 h-4.5 a3.4 3.4 0 0 0 0 6.8" fill="none" stroke="#fff" stroke-width="0.6" transform="translate(0.7,0.7)"/></g>
<g transform="translate(149.6,43.5)"><path d="M0 -6.3 l3 3 h-6z M0 6.3 l3 -3 h-6z M-6.3 0 l3 -3 v6z M6.3 0 l-3 -3 v6z" fill="#1458D0"/><rect x="-2.3" y="-2.3" width="4.6" height="4.6" rx="0.8" fill="#FFFFFF" stroke="#1458D0" stroke-width="1.5"/></g>
<g transform="translate(166,43.5)"><rect x="-5.5" y="-5.5" width="11" height="11" fill="#B01818" stroke="#1A2A90" stroke-width="0.9"/><path d="M-5 1 l5 -6 l3 2 l-4 6z" fill="#F0A030"/><path d="M-1 2 l5 3.5 l1 -1.5 l-5 -3.5z" fill="#F8C060"/><rect x="1.5" y="-4" width="3" height="3" fill="#E8E0D0" opacity="0.8"/></g>
<g transform="translate(187.5,43.5)"><rect x="-5.5" y="-5.5" width="10.5" height="10.5" fill="none" stroke="#3050C0" stroke-width="0.8" stroke-dasharray="1.4 1"/><path d="M-1.6 1.8 l-3.4 3.6" stroke="#E8A020" stroke-width="2" stroke-linecap="round"/><circle cx="1" cy="-1" r="3.4" fill="#D8ECFF" stroke="#4058B8" stroke-width="1"/><path d="M-1.2 -1 h4.4 M1 -3.2 v4.4" stroke="#E02020" stroke-width="1.5"/></g>
<g transform="translate(204,43.5)"><rect x="-5.5" y="-5.5" width="10.5" height="10.5" fill="none" stroke="#3050C0" stroke-width="0.8" stroke-dasharray="1.4 1"/><path d="M-1.6 1.8 l-3.4 3.6" stroke="#E8A020" stroke-width="2" stroke-linecap="round"/><circle cx="1" cy="-1" r="3.4" fill="#C4DCF8" stroke="#4058B8" stroke-width="1"/></g>
<g transform="translate(220,43.5)"><path d="M-1.6 1.8 l-3.4 3.6" stroke="#E8A020" stroke-width="2" stroke-linecap="round"/><circle cx="1" cy="-1" r="3.4" fill="#D8ECFF" stroke="#4058B8" stroke-width="1"/><path d="M-0.8 -1.8 h3.6 M-0.8 -0.1 h3.6" stroke="#E02020" stroke-width="1"/></g>
<g transform="translate(241,43.5)"><path d="M-1.6 1.8 l-3.4 3.6" stroke="#E8A020" stroke-width="2" stroke-linecap="round"/><circle cx="1" cy="-1" r="3.4" fill="#D8ECFF" stroke="#4058B8" stroke-width="1"/><path d="M-0.9 -1 h3.8" stroke="#E02020" stroke-width="1.4"/></g>
<g transform="translate(264,43.5)"><path d="M-5 -4.5 l3 -1.2 l6.5 7 l-3.5 3.5z" fill="#4A5A90" stroke="#28306A" stroke-width="0.5"/><path d="M-4 -4.8 l2 -0.8 l6 6.6 l-1.5 1.5z" fill="#B8C8E8"/><ellipse cx="2.6" cy="3" rx="2.4" ry="1.9" fill="#90B8F0" stroke="#28306A" stroke-width="0.6" transform="rotate(40 2.6 3)"/><path d="M1 -4.5 l4 1.5 l-1 -3z M2 -4.5 l3 3" fill="#2880E8" stroke="#2880E8" stroke-width="1"/></g>
<g transform="translate(279.7,43.5)"><path d="M5 -4.5 l-3 -1.2 l-6.5 7 l3.5 3.5z" fill="#4A5A90" stroke="#28306A" stroke-width="0.5"/><path d="M4 -4.8 l-2 -0.8 l-6 6.6 l1.5 1.5z" fill="#B8C8E8"/><ellipse cx="-2.6" cy="3" rx="2.4" ry="1.9" fill="#90B8F0" stroke="#28306A" stroke-width="0.6" transform="rotate(-40 -2.6 3)"/><path d="M-5.5 -4.5 h4.5 m-2 -1.5 l2 1.5 l-2 1.5" fill="none" stroke="#2880E8" stroke-width="1.1"/></g>
<g transform="translate(296,43.5)"><path d="M-5 -4.5 l3 -1.2 l6.5 7 l-3.5 3.5z" fill="#4A5A90" stroke="#28306A" stroke-width="0.5"/><path d="M-4 -4.8 l2 -0.8 l6 6.6 l-1.5 1.5z" fill="#B8C8E8"/><ellipse cx="2.6" cy="3" rx="2.4" ry="1.9" fill="#90B8F0" stroke="#28306A" stroke-width="0.6" transform="rotate(40 2.6 3)"/><path d="M1 -2.5 l1.5 1.5 l3 -4.5" fill="none" stroke="#E02820" stroke-width="1.3"/></g>
<g transform="translate(322.4,43.5)"><path d="M-5 -2.8 l5 -2.6 l5 2.6 l-5 2.4z" fill="#5CA010"/><path d="M-5 -2.8 l5 -2.6 l5 2.6 v5.8 l-5 2.4 l-5 -2.4z M-5 -2.8 l5 2.4 l5 -2.4 M0 -0.4 v5.8" fill="none" stroke="#6A9A10" stroke-width="0.9" stroke-linejoin="round"/><path d="M0 2 l-4 1.5 M0 2 l4 1.5 M0 2 v-5" stroke="#6A9A10" stroke-width="0.5" opacity="0.8"/></g>
<g transform="translate(338.6,43.5)"><path d="M-5 -2.8 l5 2.4 v5.8 l-5 -2.4z" fill="#5CA010"/><path d="M-5 -2.8 l5 -2.6 l5 2.6 v5.8 l-5 2.4 l-5 -2.4z M-5 -2.8 l5 2.4 l5 -2.4 M0 -0.4 v5.8" fill="none" stroke="#6A9A10" stroke-width="0.9" stroke-linejoin="round"/><path d="M0 2 l-4 1.5 M0 2 l4 1.5 M0 2 v-5" stroke="#6A9A10" stroke-width="0.5" opacity="0.8"/></g>
<g transform="translate(354.7,43.5)"><path d="M-5 -2.8 l5 2.4 v5.8 l-5 -2.4z" fill="#5CA010"/><path d="M-5 -2.8 l5 -2.6 l5 2.6 v5.8 l-5 2.4 l-5 -2.4z M-5 -2.8 l5 2.4 l5 -2.4 M0 -0.4 v5.8" fill="none" stroke="#6A9A10" stroke-width="0.9" stroke-linejoin="round"/><path d="M0 2 l-4 1.5 M0 2 l4 1.5 M0 2 v-5" stroke="#6A9A10" stroke-width="0.5" opacity="0.8"/></g>
<g transform="translate(370.7,43.5)"><path d="M-5 -2.8 l5 -2.6 l5 2.6 v5.8 l-5 2.4 l-5 -2.4z M-5 -2.8 l5 2.4 l5 -2.4 M0 -0.4 v5.8" fill="none" stroke="#6A9A10" stroke-width="0.9" stroke-linejoin="round"/><path d="M0 2 l-4 1.5 M0 2 l4 1.5 M0 2 v-5" stroke="#6A9A10" stroke-width="0.5" opacity="0.8"/></g>
<g transform="translate(397.3,43.5)"><path d="M-5 -2.8 l5 -2.6 l5 2.6 l-5 2.4z" fill="#E85050"/><path d="M-5 -2.8 l5 -2.6 l5 2.6 v5.8 l-5 2.4 l-5 -2.4z M-5 -2.8 l5 2.4 l5 -2.4 M0 -0.4 v5.8" fill="none" stroke="#D82828" stroke-width="0.9" stroke-linejoin="round"/><path d="M0 2 l-4 1.5 M0 2 l4 1.5 M0 2 v-5" stroke="#D82828" stroke-width="0.5" opacity="0.8"/></g>
<g transform="translate(397.3,43.5)"><path d="M-5 -5.5 h10 v2.6 l-5 -2.4 l-5 2.4z" fill="#303030" opacity="0.85"/></g>
<path d="M409 43 h4 l-2 2.2 z" fill="#000"/>
<g transform="translate(434,43.5)"><circle r="5.3" fill="#F0F6FF" stroke="#1860D8" stroke-width="1"/><ellipse rx="2.6" ry="5.3" fill="none" stroke="#1860D8" stroke-width="0.8"/><path d="M-5.3 0 h10.6 M-4.5 -2.8 h9 M-4.5 2.8 h9" stroke="#1860D8" stroke-width="0.8"/><rect x="-2.6" y="-2.8" width="5.2" height="5.6" fill="#fff" opacity="0.55"/></g>
<path d="M444.7 43 h4 l-2 2.2 z" fill="#000"/>
<defs><radialGradient id="sph" cx="0.38" cy="0.3" r="0.75"><stop offset="0" stop-color="#8CC0FF"/><stop offset="0.35" stop-color="#2878E8"/><stop offset="1" stop-color="#0A3CA8"/></radialGradient></defs>
<g transform="translate(459,43.5)"><circle r="5.6" fill="url(#sph)"/></g>
<path d="M470 43 h4 l-2 2.2 z" fill="#000"/>
<g transform="translate(495,43.5)"><g transform="translate(0,0) scale(1.0)"><path d="M-5.2 3 l7.5 -7.5 l2.4 2.4 l-7.5 7.5z" fill="#F0C020" stroke="#B08810" stroke-width="0.5"/><path d="M-3.9 1.8 l7.5 -7.5" stroke="#FFE870" stroke-width="0.9"/><path d="M-5.2 3 l2.4 2.4 l-2.2 0.6 q-1 0.1 -0.8 -0.8z" fill="#F06878"/></g></g>
<g transform="translate(511.3,43.5)"><g transform="translate(-1.5,-1.5) scale(0.8)"><path d="M-5.2 3 l7.5 -7.5 l2.4 2.4 l-7.5 7.5z" fill="#F0C020" stroke="#B08810" stroke-width="0.5"/><path d="M-3.9 1.8 l7.5 -7.5" stroke="#FFE870" stroke-width="0.9"/><path d="M-5.2 3 l2.4 2.4 l-2.2 0.6 q-1 0.1 -0.8 -0.8z" fill="#F06878"/></g><g transform="translate(1.8,1.5) scale(0.8)"><path d="M-5.2 3 l7.5 -7.5 l2.4 2.4 l-7.5 7.5z" fill="#F0C020" stroke="#B08810" stroke-width="0.5"/><path d="M-3.9 1.8 l7.5 -7.5" stroke="#FFE870" stroke-width="0.9"/><path d="M-5.2 3 l2.4 2.4 l-2.2 0.6 q-1 0.1 -0.8 -0.8z" fill="#F06878"/></g></g>
<path d="M522 43 h4 l-2 2.2 z" fill="#000"/>
<g transform="translate(542.5,43.5)"><g transform="translate(0,0) scale(1.0)"><path d="M-5.2 3 l7.5 -7.5 l2.4 2.4 l-7.5 7.5z" fill="#F0C020" stroke="#B08810" stroke-width="0.5"/><path d="M-3.9 1.8 l7.5 -7.5" stroke="#FFE870" stroke-width="0.9"/><path d="M-5.2 3 l2.4 2.4 l-2.2 0.6 q-1 0.1 -0.8 -0.8z" fill="#F06878"/></g><path d="M-1.5 -4.5 l4 3.5 l-1.2 -0.2 l0.5 1.2" fill="none" stroke="#2088F0" stroke-width="1.6"/></g>
<path d="M553 43 h4 l-2 2.2 z" fill="#000"/>
<g transform="translate(579.3,43.5)"><path d="M-5.5 -2.5 l7.5 8" stroke="#202020" stroke-width="1"/></g>
<g transform="translate(595.4,43.5)"><path d="M-2.6 0 h5.2 M0 -4 v8" stroke="#2090E0" stroke-width="1"/><rect x="-5.2" y="-5.5" width="3" height="3" fill="#fff" stroke="#A020A0" stroke-width="1"/><rect x="-5.2" y="-1.5" width="3" height="3" fill="#fff" stroke="#A020A0" stroke-width="1"/><rect x="-5.2" y="2.5" width="3" height="3" fill="#fff" stroke="#A020A0" stroke-width="1"/><rect x="2.2" y="-5.5" width="3" height="3" fill="#fff" stroke="#E05020" stroke-width="1"/><rect x="2.2" y="-1.5" width="3" height="3" fill="#fff" stroke="#2080E0" stroke-width="1"/><rect x="2.2" y="2.5" width="3" height="3" fill="#fff" stroke="#40A030" stroke-width="1"/></g>
<g transform="translate(617,43.5)"><path d="M-4.2 -5 v10 M4.4 -3.5 v8" stroke="#1878D8" stroke-width="1.8"/><path d="M-4.2 0.5 h8" stroke="#F07020" stroke-width="2"/><circle cx="-4.2" cy="-3" r="1.3" fill="#1878D8"/><circle cx="-4.2" cy="3.5" r="1.3" fill="#1878D8"/></g>
<g transform="translate(633.4,43.5)"><rect x="-5.5" y="-5.5" width="11" height="11" fill="#F05010"/><path d="M-3.5 -1.5 l4 -3 l4 4.5 l-5.5 1.5z" fill="#F8C070"/><path d="M-1 1.5 l3.5 3.5 l1.5 -1 l-2.5 -3.5z" fill="#F8B050"/></g>
<g transform="translate(649.6,43.5)"><path d="M4.6 -3.6 v-1.6 h-9.2 l4.8 5.2 l-4.8 5.2 h9.2 v-1.6" fill="none" stroke="#1060D0" stroke-width="2" stroke-linejoin="miter"/></g>
<g transform="translate(666,43.5)"><path d="M1 -5 h-5.5 v10 h5.5 M4.5 -5 v2.5 M4.5 2.5 v2.5" fill="none" stroke="#20A020" stroke-width="2"/><path d="M-1.5 -1 h4 v-1.6 l3.4 2.6 l-3.4 2.6 v-1.6 h-4z" fill="#A010A0"/></g>
<path d="M676.6 43 h4 l-2 2.2 z" fill="#000"/>
<defs><linearGradient id="gpl" x1="0" y1="0" x2="1" y2="1"><stop offset="0" stop-color="#70E060"/><stop offset="0.5" stop-color="#28A828"/><stop offset="1" stop-color="#107810"/></linearGradient></defs>
<g transform="translate(16,65)"><path d="M-1.9 -5.2 h3.8 v3.3 h3.3 v3.8 h-3.3 v3.3 h-3.8 v-3.3 h-3.3 v-3.8 h3.3z" fill="url(#gpl)" stroke="#1A8A1A" stroke-width="0.6" stroke-linejoin="round"/></g>
<path d="M27 64.5 h4 l-2 2.2 z" fill="#000"/>
<g transform="translate(41.3,65)"><path d="M-3.5 -3.5 l7.5 7.5" stroke="#20A030" stroke-width="1.3"/><path d="M-4 -6 v4 M-6 -4 h4 M4 2.2 v4 M2 4.2 h4" stroke="#5050B0" stroke-width="0.9"/></g>
<path d="M52.3 64.5 h4 l-2 2.2 z" fill="#000"/>
<g transform="translate(66.7,65)"><circle cx="-0.5" cy="0.5" r="5" fill="none" stroke="#30A040" stroke-width="1"/><path d="M-0.5 -2 v5 M-3 0.5 h5" stroke="#F05010" stroke-width="1.8"/><path d="M3 -5.8 v4.6 M0.7 -3.5 h4.6" stroke="#F05010" stroke-width="1.5"/></g>
<path d="M77.7 64.5 h4 l-2 2.2 z" fill="#000"/>
<g transform="translate(92,65)"><rect x="-4" y="-4" width="8" height="8" fill="none" stroke="#18A028" stroke-width="1.5"/><path d="M0 -2 v4 M-2 0 h4" stroke="#5858A8" stroke-width="1.6"/><path d="M4 -6 v4 M2 -4 h4 M-4 2 v4 M-6 4 h4" stroke="#5050B0" stroke-width="0.9"/></g>
<path d="M103 64.5 h4 l-2 2.2 z" fill="#000"/>
<g transform="translate(117.5,65)"><path d="M-4 5 v-4.5" stroke="#5050B0" stroke-width="1.3"/><path d="M0 -5 h5" stroke="#5050B0" stroke-width="1.3"/><path d="M-4 -0.5 a4.5 4.5 0 0 1 4 -4.5" fill="none" stroke="#18A028" stroke-width="1.5" stroke-dasharray="2 0.8"/></g>
<path d="M128.5 64.5 h4 l-2 2.2 z" fill="#000"/>
<g transform="translate(142.5,65)"><path d="M-5 5 v-2.5 q0 -2 2 -2 h4.5 q2 0 2 -2 v-3.5" fill="none" stroke="#18A028" stroke-width="1.7"/></g>
<path d="M154 64.5 h4 l-2 2.2 z" fill="#000"/>
<defs><linearGradient id="cyl" x1="0" y1="0" x2="1" y2="0"><stop offset="0" stop-color="#D8F0D8"/><stop offset="0.45" stop-color="#80C890"/><stop offset="1" stop-color="#187830"/></linearGradient></defs>
<g transform="translate(167.5,65)"><path d="M-5 -3.8 v8 a5 1.8 0 0 0 10 0 v-8z" fill="url(#cyl)"/><ellipse cy="-3.8" rx="5" ry="1.8" fill="#208838"/></g>
<path d="M179 64.5 h4 l-2 2.2 z" fill="#000"/>
<g transform="translate(204,65)"><path d="M-1 -1 l5.5 -4 M-1 1.5 l5 -2" stroke="#8888B8" stroke-width="0.8"/><circle cx="-3.2" cy="-0.8" r="2" fill="none" stroke="#1450C8" stroke-width="1.4"/><circle cx="-2.2" cy="2.6" r="2" fill="none" stroke="#1450C8" stroke-width="1.4"/><path d="M4 -1 v6" stroke="#A01880" stroke-width="1.6"/><rect x="3.2" y="-4.5" width="1.6" height="1.6" fill="#A01880"/></g>
<g transform="translate(220,65)"><path d="M-1 -1 l5.5 -4 M-1 1.5 l5 -2" stroke="#8888B8" stroke-width="0.8"/><circle cx="-3.2" cy="-0.8" r="2" fill="none" stroke="#1450C8" stroke-width="1.4"/><circle cx="-2.2" cy="2.6" r="2" fill="none" stroke="#1450C8" stroke-width="1.4"/><path d="M2.2 0 v5 M4.8 0 v5" stroke="#C060A0" stroke-width="1.5"/><path d="M1 -1.5 h5" stroke="#C060A0" stroke-width="1.2"/></g>
<path d="M231 64.5 h4 l-2 2.2 z" fill="#000"/>
<g transform="translate(256,65)"><rect x="-5.5" y="0" width="4.5" height="4.5" fill="#fff" stroke="#1878E0" stroke-width="1.4"/><rect x="1" y="-5.5" width="4.5" height="4.5" fill="#fff" stroke="#980890" stroke-width="1.5"/><path d="M0.5 4.5 h3.5 v-3 m-1.6 1.2 l1.6 -1.8 l1.6 1.8" fill="none" stroke="#1878E0" stroke-width="1.4"/></g>
<g transform="translate(272,65)"><rect x="-5.5" y="-5.5" width="4.5" height="5.5" fill="#fff" stroke="#980890" stroke-width="1.5"/><path d="M-3.2 -4 v2.5" stroke="#980890" stroke-width="1"/><path d="M-1 1.5 v4 h6.5 v-4 M0.5 3 h3.5" fill="none" stroke="#1878E0" stroke-width="1.3"/><path d="M1 -4.5 q3 0 3.5 3 m-1.6 -1 l1.6 1.4 l1.2 -1.8" fill="none" stroke="#1878E0" stroke-width="1.1"/></g>
<g transform="translate(288,65)"><path d="M-5.5 -5 h3 v6 h-3 M5.5 -5 h-3 v6 h3" fill="none" stroke="#980890" stroke-width="1.4"/><path d="M-2.5 -2 h5 M0 -4 v4" stroke="#1878E0" stroke-width="1.2"/><path d="M-5 4 h8 m-1.5 -1.6 l2.5 1.6 l-2.5 1.6" fill="none" stroke="#1878E0" stroke-width="1.4"/></g>
<g transform="translate(304.5,65)"><rect x="-5.3" y="-0.5" width="4" height="5.5" fill="#fff" stroke="#1878E0" stroke-width="1.4"/><path d="M-5 -3 h4 m-2.2 -1.8 l-1.8 1.8" fill="none" stroke="#1878E0" stroke-width="1"/><rect x="1.2" y="-5.2" width="4" height="10.4" fill="#fff" stroke="#980890" stroke-width="1.5"/></g>
<g transform="translate(321,65)"><path d="M-5.5 -3 l7 -2.5 v2.5 l-3.5 2z" fill="#1878E0"/><path d="M1.5 -2.5 l4 -3 v8.5 l-4 3z" fill="#980890"/><path d="M-4 -1 l3 4 m-0.2 -2.2 l0.2 2.2 l-2.2 -0.4" fill="none" stroke="#1878E0" stroke-width="1.1"/></g>
<g transform="translate(342,65)"><path d="M-4.5 -5.5 v11 M4.5 -5.5 v11" stroke="#1878E0" stroke-width="1.6"/><path d="M-3.5 0 h5" stroke="#980890" stroke-width="1.3"/><path d="M-3.6 0 l2.8 -2.2 v4.4z" fill="#1878E0"/></g>
<g transform="translate(359,65)"><path d="M-5.5 5 h6 q4.5 0 4.5 -4.5 v-6" fill="none" stroke="#980890" stroke-width="1.6"/><path d="M-4.5 -1 h2.5 v-3" fill="none" stroke="#1878E0" stroke-width="1.2"/><path d="M-1 -2 l3.5 3.5 m-0.2 -2.2 l0.2 2.2 l-2.2 -0.2" fill="none" stroke="#980890" stroke-width="1.1"/></g>
<g transform="translate(374.7,65)"><path d="M-5.5 -5.5 q2.5 0 5.5 2 q3 -2 5.5 -2" fill="none" stroke="#1878E0" stroke-width="1"/><path d="M-5 4.5 h10" stroke="#980890" stroke-width="1.7"/><path d="M0 -3.5 v5.5 m-2 -1.8 l2 2 l2 -2 M-2.5 -0.5 h5" fill="none" stroke="#980890" stroke-width="1.2"/></g>
<g transform="translate(391,65)"><rect x="-5" y="-5" width="3.6" height="3.6" fill="#fff" stroke="#980890" stroke-width="1.6"/><rect x="1.4" y="-5" width="3.6" height="3.6" fill="#fff" stroke="#980890" stroke-width="1.6"/><rect x="-5" y="1.4" width="3.6" height="3.6" fill="#fff" stroke="#1878E0" stroke-width="1.6"/><rect x="1.4" y="1.4" width="3.6" height="3.6" fill="#fff" stroke="#980890" stroke-width="1.6"/></g>
<g transform="translate(407,65)"><circle cx="-3.3" cy="0" r="2.2" fill="#fff" stroke="#980890" stroke-width="1.2"/><path d="M-1 0 h6.5 M5.5 -2.5 v5" stroke="#1878E0" stroke-width="1.2"/><path d="M1 0 l2.2 -1.7 v3.4z" fill="#1878E0"/></g>
<g transform="translate(423.3,65)"><path d="M-5.5 5 h9 l-3.5 -10z" fill="#fff" stroke="#980890" stroke-width="1.2"/><path d="M4.5 5 v-8 m-1.3 1.8 l1.3 -2 l1.3 2" fill="none" stroke="#1878E0" stroke-width="1.2"/><path d="M-3 2 q2.5 -3 5 0" fill="none" stroke="#1878E0" stroke-width="0.7"/></g>
<g transform="translate(451.3,65)"><path d="M-4.5 -2.3 a3.3 3.3 0 1 1 5 2.8 l-0.4 1.8 h-2.6 l-0.4 -1.8 a3.3 3.3 0 0 1 -1.6 -2.8z" fill="#FFF060" stroke="#E0C020" stroke-width="0.5"/><rect x="-3" y="2.4" width="2.6" height="2.8" fill="#909090"/><path d="M4 -3.5 v7 m-1.6 -5.4 l1.6 -2.2 l1.6 2.2 m-3.2 3.8 l1.6 2.2 l1.6 -2.2" fill="none" stroke="#5058B0" stroke-width="1.3"/></g>
<path d="M462.3 64.5 h4 l-2 2.2 z" fill="#000"/>
<g transform="translate(476.7,65)"><path d="M-4.5 4.5 l6 -6 m-6 2 v4 h4" fill="none" stroke="#4858B0" stroke-width="1.5"/><path d="M-1 -5 h6.5 M1.5 -3 h4 M3 -5 v3" stroke="#5868B8" stroke-width="1.1" fill="none"/></g>
<g transform="translate(503.5,65)"><rect x="-4.8" y="-4.8" width="9.6" height="9.6" fill="#F4F0FF" stroke="#F04810" stroke-width="1.6"/><path d="M0 -4 v8 M-4 0 h8" stroke="#383890" stroke-width="1.1"/><circle cx="-4.8" cy="-4.8" r="1" fill="#F04810"/><circle cx="4.8" cy="-4.8" r="1" fill="#F04810"/><circle cx="-4.8" cy="4.8" r="1" fill="#F04810"/><circle cx="4.8" cy="4.8" r="1" fill="#F04810"/></g>
<g transform="translate(519.7,65)"><path d="M-5.3 -5 h10.6 M-5.3 5 h10.6 M-5.3 0 h10.6" stroke="#F04810" stroke-width="1.5"/><path d="M-5 -2.5 h10 M-5 2.5 h10" stroke="#7080D0" stroke-width="0.9"/><path d="M0 -5 v10" stroke="#F04810" stroke-width="1"/></g>
<defs><linearGradient id="sail" x1="0" y1="0" x2="1" y2="1"><stop offset="0" stop-color="#fff"/><stop offset="1" stop-color="#60B0F0"/></linearGradient></defs>
<g transform="translate(536,65)"><path d="M-5.5 5 l4.5 -10 v10z" fill="#fff" stroke="#D0D8E8" stroke-width="0.4"/><path d="M-1 -5.5 q6 2 6.5 10.5 h-6.5z" fill="url(#sail)"/><path d="M-1 -5.5 v10.5" stroke="#303030" stroke-width="1.1"/><path d="M-1 -5.5 q6 2 6.5 10.5" fill="none" stroke="#E03020" stroke-width="1.1"/></g>
<g transform="translate(552,65)"><path d="M-4.5 2.5 l6.5 -6.5 q2.5 -1 3.5 1.5 l-6.5 6.5z" fill="#A8CCF0" stroke="#5070B0" stroke-width="0.5"/><path d="M-4.5 2.5 l6.5 -6.5" stroke="#E04818" stroke-width="1.2"/><path d="M-4.5 2.500 q2.500 -1 3.500 1.500 l-1.2 2" fill="none" stroke="#E04818" stroke-width="1.2"/><path d="M-2 3 l6 -6" stroke="#fff" stroke-width="0.8"/></g>
<g transform="translate(567.7,65)"><rect x="-5" y="-5.2" width="10" height="10.4" rx="1" fill="#6888C8" stroke="#384878" stroke-width="0.7"/><path d="M-2 -5 v10 M2.500 -5 v10" stroke="#C8D8F0" stroke-width="0.8"/><path d="M0 4 v-5 h-1.800 l2.300 -2.600 l2.300 2.600 h-1.800 v5z" fill="#fff" stroke="#607098" stroke-width="0.4"/></g>
<path d="M579 64.5 h4 l-2 2.2 z" fill="#000"/>
<g transform="translate(599,65)"><path d="M-2 1 l5 2 l2 -2 l-4 -3z" fill="#C0D0E8" stroke="#8090B8" stroke-width="0.5"/><circle cx="-1.500" cy="-1.500" r="3" fill="none" stroke="#E85030" stroke-width="1.1"/><path d="M-4.500 -4 l5 4 M1 -4.500 l-4.500 5" stroke="#E85030" stroke-width="0.9"/><path d="M0 2 l-2 3.500" stroke="#A0B0D0" stroke-width="1.600"/></g>
<g transform="translate(615,65)"><path d="M-4.500 -1 q1 -4 5 -4 q3.500 0 4 4 l-2 5 l-2 -3 l-3 3z" fill="#7890B8" stroke="#506080" stroke-width="0.5"/><path d="M-3 -3 l5 5 M2 -4.500 l-4 6 M4.500 -2 l-3 1" stroke="#E85030" stroke-width="1"/></g>
<g transform="translate(631,65)"><path d="M-5 -3 l2 -2.500 h8 v8 l-2 2.500 h-8z" fill="#F4F4F4" stroke="#303030" stroke-width="0.9"/><path d="M-5 -3 h8 v8 M3 -3 l2 -2.500 M-1.500 -3 v8 M-5 1 h8 M-1 -5.500 l-1 2.500" fill="none" stroke="#303030" stroke-width="0.8"/></g>
<g transform="translate(654,65)"><path d="M-5.500 2 l5 -2 l6 2 l-5.500 3z" fill="#A0C0E8" stroke="#6080B0" stroke-width="0.5"/><path d="M-3 -4 l3 -1.500 l3 1.500 v5 l-3 1.500 l-3 -1.500z M-3 -4 l3 1.500 l3 -1.500 M0 -2.500 v5" fill="#F8D0C8" stroke="#D83020" stroke-width="0.9"/></g>
<path d="M664.4 64.5 h4 l-2 2.2 z" fill="#000"/>
<g transform="translate(678.4,65)"><rect x="-5.500" y="-5.500" width="11" height="11" fill="#505860"/><path d="M-5.500 -1 l4.500 -4.500 h3 l-7.500 7.500z" fill="#E04030"/><path d="M-3 3 l7 -7 l2 2 l-7 7z" fill="#B8D0F0"/><path d="M1 5.500 l4.500 -4.500 v4.500z" fill="#E04030"/></g>
<path d="M689.6 64.5 h4 l-2 2.2 z" fill="#000"/>
<g transform="translate(704,65)"><rect x="-1.600" y="-5.500" width="3.200" height="4.500" fill="#404858"/><path d="M-3 -1 h6 l1.500 6.500 h-9z" fill="#C03828"/><path d="M-2 1 v4 M0 1 v4 M2 1 v4" stroke="#F0A090" stroke-width="0.700"/></g>
<path d="M715 64.5 h4 l-2 2.2 z" fill="#000"/>
<g transform="translate(241,86.3)"><path d="M-5 2 l4 -4 M-1 3 l5 -5 M-4 -2 l3 1 M1 -4 l3 1" fill="none" stroke="#FFFFFF" stroke-width="1" transform="translate(0.8,0.8)"/><path d="M-5 2 l4 -4 M-1 3 l5 -5 M-4 -2 l3 1 M1 -4 l3 1" fill="none" stroke="#C4C1B0" stroke-width="1"/></g>
<g transform="translate(257.6,86.3)"><path d="M-2 -5 l1.500 5 l1.500 -5 M-1 1 v4 h2 v-4" fill="none" stroke="#FFFFFF" stroke-width="1" transform="translate(0.8,0.8)"/><path d="M-2 -5 l1.500 5 l1.500 -5 M-1 1 v4 h2 v-4" fill="none" stroke="#C4C1B0" stroke-width="1"/></g>
<g transform="translate(274,86.3)"><path d="M-5.500 5 l10 -10 M-2 0 l3 2" fill="none" stroke="#FFFFFF" stroke-width="1" transform="translate(0.8,0.8)"/><path d="M-5.500 5 l10 -10 M-2 0 l3 2" fill="none" stroke="#C4C1B0" stroke-width="1"/></g>
<g transform="translate(287.4,86.3)"><path d="M-1.500 0 h3" fill="none" stroke="#FFFFFF" stroke-width="1" transform="translate(0.8,0.8)"/><path d="M-1.500 0 h3" fill="none" stroke="#C4C1B0" stroke-width="1"/></g>
<g transform="translate(468,86.3)"><path d="M-4 -4.500 l7.500 8.500" stroke="#202020" stroke-width="1"/></g>
<path d="M478.6 85.8 h4 l-2 2.2 z" fill="#000"/>
<g transform="translate(494.4,86.3)"><path d="M-4.500 -5.500 l9 4 l-5.500 5.500z M2 4 l2 -2" fill="none" stroke="#FFFFFF" stroke-width="1" transform="translate(0.8,0.8)"/><path d="M-4.500 -5.500 l9 4 l-5.500 5.500z M2 4 l2 -2" fill="none" stroke="#C4C1B0" stroke-width="1"/></g>
<g transform="translate(511.6,86.3)"><path d="M-4.500 -4 h3 l1.500 1.500 l1.500 -1.500 h3 v6 l-3 3 h-3 l-3 -3z" fill="none" stroke="#FFFFFF" stroke-width="1" transform="translate(0.8,0.8)"/><path d="M-4.500 -4 h3 l1.500 1.500 l1.500 -1.500 h3 v6 l-3 3 h-3 l-3 -3z" fill="none" stroke="#C4C1B0" stroke-width="1"/></g>
<g transform="translate(533,86.3)"><path d="M-2.600 -5 h5.200 l2.600 4.500 l-2.600 4.500 h-5.200 l-2.600 -4.500z" fill="none" stroke="#FFFFFF" stroke-width="1" transform="translate(0.8,0.8)"/><path d="M-2.600 -5 h5.200 l2.600 4.500 l-2.600 4.500 h-5.200 l-2.600 -4.500z" fill="none" stroke="#C4C1B0" stroke-width="1"/></g>
<g transform="translate(549.6,86.3)"><path d="M-2.600 -5 h5.200 l2.600 4.500 l-2.600 4.500 h-5.200 l-2.600 -4.500z" fill="none" stroke="#FFFFFF" stroke-width="1" transform="translate(0.8,0.8)"/><path d="M-2.600 -5 h5.200 l2.600 4.500 l-2.600 4.500 h-5.200 l-2.600 -4.500z" fill="none" stroke="#C4C1B0" stroke-width="1"/></g>
<g transform="translate(566.4,86.3)"><path d="M-2.600 -5 h5.200 l2.600 4.500 l-2.600 4.500 h-5.200 l-2.600 -4.500z" fill="none" stroke="#FFFFFF" stroke-width="1" transform="translate(0.8,0.8)"/><path d="M-2.600 -5 h5.200 l2.600 4.500 l-2.600 4.500 h-5.200 l-2.600 -4.500z" fill="none" stroke="#C4C1B0" stroke-width="1"/></g>
<g transform="translate(587,86.3)"><path d="M-3 -5 h6 l2 3 v5 l-2 3 h-6 l-2 -3 v-5z M0 -4 v9 M-2 0 h4" fill="none" stroke="#FFFFFF" stroke-width="1" transform="translate(0.8,0.8)"/><path d="M-3 -5 h6 l2 3 v5 l-2 3 h-6 l-2 -3 v-5z M0 -4 v9 M-2 0 h4" fill="none" stroke="#C4C1B0" stroke-width="1"/></g>
<g transform="translate(602,86.3)"><path d="M-4 4 l6 -6 l1.500 1.500 l-6 6z M5 4 h1" fill="none" stroke="#FFFFFF" stroke-width="1" transform="translate(0.8,0.8)"/><path d="M-4 4 l6 -6 l1.500 1.500 l-6 6z M5 4 h1" fill="none" stroke="#C4C1B0" stroke-width="1"/></g>
<g transform="translate(626,86.3)"><path d="M-4.500 -6 l1 8 l2 -2.200 l2 3.200 l1.500 -1 l-2 -3.200 l2.800 -0.500z" fill="#fff" stroke="#202020" stroke-width="0.8"/><path d="M-2.500 2.500 l3.500 4 l5 -7" fill="none" stroke="#2870E8" stroke-width="1.700"/></g>
<g transform="translate(647,86.3)"><path d="M5 0 a5 5 0 1 1 -10 0 a5 5 0 1 1 10 0 M-3.500 3.500 l7 -7" fill="none" stroke="#FFFFFF" stroke-width="1" transform="translate(0.8,0.8)"/><path d="M5 0 a5 5 0 1 1 -10 0 a5 5 0 1 1 10 0 M-3.500 3.500 l7 -7" fill="none" stroke="#C4C1B0" stroke-width="1"/></g>
<g transform="translate(664,86.3)"><path d="M5.500 0 a5.500 5.500 0 1 1 -11 0 a5.500 5.500 0 1 1 11 0" fill="none" stroke="#FFFFFF" stroke-width="1" transform="translate(0.8,0.8)"/><path d="M5.500 0 a5.500 5.500 0 1 1 -11 0 a5.500 5.500 0 1 1 11 0" fill="none" stroke="#C4C1B0" stroke-width="1"/></g>
<g transform="translate(710.5,134)"><g transform="translate(0,0) scale(1.05)"><path d="M-5.2 3 l7.5 -7.5 l2.4 2.4 l-7.5 7.5z" fill="#F0C020" stroke="#B08810" stroke-width="0.5"/><path d="M-3.9 1.8 l7.5 -7.5" stroke="#FFE870" stroke-width="0.9"/><path d="M-5.2 3 l2.4 2.4 l-2.2 0.6 q-1 0.1 -0.8 -0.8z" fill="#F06878"/></g></g>
<g transform="translate(710,150)"><path d="M-2.500 -5 h5 M-2.500 5 h5" stroke="#9098C8" stroke-width="0.9"/><path d="M0 -4 v8" stroke="#5060B0" stroke-width="1.3"/></g>
<g transform="translate(710,165.5)"><path d="M-2.600 0 h5.200 M0 -4 v8" stroke="#2090E0" stroke-width="1"/><rect x="-5.200" y="-5" width="3" height="3" fill="#fff" stroke="#A020A0" stroke-width="1"/><rect x="-5.200" y="-1" width="3" height="3" fill="#fff" stroke="#A020A0" stroke-width="1"/><rect x="-5.200" y="3" width="3" height="3" fill="#fff" stroke="#A020A0" stroke-width="1"/><rect x="2.200" y="-5" width="3" height="3" fill="#fff" stroke="#E05020" stroke-width="1"/><rect x="2.200" y="-1" width="3" height="3" fill="#fff" stroke="#2080E0" stroke-width="1"/><rect x="2.200" y="3" width="3" height="3" fill="#fff" stroke="#40A030" stroke-width="1"/></g>
<g transform="translate(710,181.5)"><path d="M-3 -4 h7 M-4.500 -5.500 h2.500 v3 h-2.500z" fill="none" stroke="#404040" stroke-width="0.9"/><ellipse cx="-1.500" cy="2" rx="3.200" ry="2.500" fill="#606878"/><path d="M3.500 -2 v7 m-1.500 -5 l1.500 -2 l1.500 2 m-3 3 l1.500 2 l1.500 -2" fill="none" stroke="#303848" stroke-width="1.100"/></g>
<g transform="translate(710,196.5)"><path d="M-5 -4 v8 M5 -4 v8" stroke="#9098C8" stroke-width="0.9"/><path d="M-4 0 h8" stroke="#5060B0" stroke-width="1.300"/></g>
<g transform="translate(710,212.5)"><path d="M-5 -2.500 h3 l1 1 h5 v7 h-9z" fill="#E8B820" stroke="#B88A10" stroke-width="0.600"/><path d="M-5 5.500 l2 -5.500 h9 l-2.500 5.500z" fill="#FCE060" stroke="#C89A18" stroke-width="0.600"/><path d="M-2 -1.500 q1.500 -4 5 -3.600 l0 -1.600 l3.200 2.800 l-3.200 2.600 l0 -1.600 q-3 -0.300 -5 1.400z" fill="#3CB43C" stroke="#1E8A1E" stroke-width="0.400"/></g>
<g transform="translate(92.5,529.5)"><rect x="-5.5" y="-5.5" width="11" height="11" fill="#8E8618" stroke="#E8E8B0" stroke-width="0.7"/><circle r="3" fill="none" stroke="#fff" stroke-width="1.100"/><path d="M0 -2 v2 h1.500" stroke="#fff" stroke-width="0.8" fill="none"/></g>
<g transform="translate(107.5,529.5)"><rect x="-5" y="-4.500" width="10" height="9.500" rx="1.500" fill="#E8F0FF" stroke="#4070D0" stroke-width="1"/><path d="M2 -2 a3 3 0 1 0 0 4" fill="none" stroke="#2860D0" stroke-width="1.600"/><circle cx="4" cy="-4" r="1.600" fill="#E84020"/></g>
<g transform="translate(124,529.5)"><path d="M3.500 -1 a4 4 0 1 0 -0.500 3.500 M-3.500 0.200 h7" fill="none" stroke="#58B0F8" stroke-width="2"/><path d="M-5.500 3.500 q5 -10 10.500 -7" fill="none" stroke="#F0D040" stroke-width="0.9"/></g>
<g transform="translate(160,529.5)"><path d="M-3.500 -5 h5 l2.500 2.500 v7.500 h-7.500z" fill="#fff" stroke="#A0B0D0" stroke-width="0.500"/><path d="M2 -1 a3 3 0 1 0 -0.300 2.600 M-3.500 0 h5" fill="none" stroke="#2868D8" stroke-width="1.500"/></g>
<g transform="translate(222,529.5)"><path d="M-1 -5.500 l-4.500 6 l4 -0.500 l-2 5 l8 -7.500 l-4.500 0.500 l3 -3.500z" fill="#E82020"/><path d="M-5.500 0.500 l4 -0.500 l-1 2.500z" fill="#F8E020"/></g>
<path d="M264 528.5 h4 l-2 2.2 z" fill="#fff"/>
<g transform="translate(284,529.5)"><path d="M-5.500 2 l8 -7 l3 3 l-8 7z" fill="#E88820" stroke="#B86010" stroke-width="0.500"/><path d="M-3 0 l5 5 M0 -3 l5 5" stroke="#FFF0C0" stroke-width="1"/></g>
<g transform="translate(345.5,529.5)"><circle r="5" fill="#28A028"/><circle r="3" fill="#C8E820"/><circle r="1.500" fill="#60B020"/></g>
<g transform="translate(407,529.5)"><path d="M-5.500 -3.500 h4 l1 1.200 h6 v7 h-11z" fill="#F0C848" stroke="#C09820" stroke-width="0.600"/><path d="M-5.500 -1 h11" stroke="#FFF0A0" stroke-width="1"/></g>
<path d="M449.5 528.5 h4 l-2 2.2 z" fill="#fff"/>
<g transform="translate(469,529.5)"><path d="M-4.500 -5 L-1.500 -5 L4.500 5 L1.500 5 Z" fill="#111"/><path d="M2 -5 L5 -5 L-2 5 L-5 5 Z" fill="#fff" stroke="#333" stroke-width="0.500"/><path d="M1.500 -5 L4.500 -5 L2.200 -1.500 L0.500 -3 Z" fill="#E8C020"/></g>
<g transform="translate(531,529.5)"><path d="M-3.500 -1 h7 l-1 6 h-5z" fill="#B06830"/><path d="M-2.500 -1 l-1.500 -4.500 M0 -1 v-5 M2.500 -1 l1.500 -4" stroke="#40B040" stroke-width="1.200"/><path d="M-1 -1 l-0.500 -4 M1.200 -1 l1 -4.500" stroke="#E04040" stroke-width="1"/></g>
<circle cx="592" cy="529.5" r="5.500" fill="#2C7CF0" stroke="#A8D0FF" stroke-width="0.800"/><path d="M593.500 526.500 l-3 3 l3 3" fill="none" stroke="#fff" stroke-width="1.500"/>
<g transform="translate(604.7,529.5)"><circle r="5" fill="#38B838" stroke="#187818" stroke-width="0.500"/><circle r="2.800" fill="#C8F020"/></g>
<g transform="translate(617.8,529.5)"><rect x="-5" y="-3" width="9" height="7" fill="#F0B030" stroke="#B07810" stroke-width="0.500"/><rect x="-3" y="-5" width="5" height="4" fill="#F8F0D0"/><circle cx="3.500" cy="-3" r="1.800" fill="#E84020"/></g>
<g transform="translate(630,529.5)"><circle r="5.200" fill="#F8C820" stroke="#B08010" stroke-width="0.500"/><circle cx="-1.800" cy="-1.200" r="0.800" fill="#402000"/><circle cx="1.800" cy="-1.200" r="0.800" fill="#402000"/><path d="M-2.800 1.200 q2.800 3 5.600 0z" fill="#C02010"/></g>
<g transform="translate(643,529.5)"><circle r="5.200" fill="#4860A0" stroke="#C0C8E0" stroke-width="0.600"/></g>
<g transform="translate(655.5,529.5)"><circle r="5.300" fill="#E8E4D0" stroke="#806820" stroke-width="0.600"/><path d="M0 -4 l3.500 7 h-7z" fill="#F0C020" stroke="#604000" stroke-width="0.700"/><circle cy="-0.500" r="1.300" fill="#3050C0"/></g>
<g transform="translate(668,529.5)"><circle cx="-0.500" cy="-3" r="2.200" fill="#D03020"/><path d="M-4 5 q0 -5 3.500 -5 q3.500 0 3.500 5z" fill="#D03020"/><rect x="2" y="1" width="3.500" height="4" fill="#F0A020"/></g>
<g transform="translate(680.5,529.5)"><circle cx="-1" cy="-0.500" r="4.500" fill="#707880" stroke="#303840" stroke-width="0.600"/><circle cx="-1" cy="-0.500" r="2" fill="#B0B8C0"/><path d="M2.500 1 q2 1.500 2 4" stroke="#B8C8E0" stroke-width="1.200" fill="none"/></g>
</svg>
<span style="position:absolute;left:15.5px;top:4.73px;font-size:10px;line-height:10px;font-weight:bold;color:#fff;white-space:pre;transform:scaleX(0.8586);transform-origin:0 0;text-shadow:0.6px 0.6px 0 #0A2A80;">Mastercam Design SP1</span>
<span style="position:absolute;left:116.7px;top:4.73px;font-size:10px;line-height:10px;font-weight:bold;color:#fff;white-space:pre;transform:scaleX(0.8930);transform-origin:0 0;text-shadow:0.6px 0.6px 0 #0A2A80;">C:\Documents and Settings</span>
<span style="position:absolute;left:233.3px;top:4.73px;font-size:10px;line-height:10px;font-weight:bold;color:#fff;white-space:pre;transform:scaleX(0.8678);transform-origin:0 0;text-shadow:0.6px 0.6px 0 #0A2A80;">\AYSE\Desktop</span>
<span style="position:absolute;left:295.2px;top:4.73px;font-size:10px;line-height:10px;font-weight:bold;color:#fff;white-space:pre;transform:scaleX(0.9088);transform-origin:0 0;text-shadow:0.6px 0.6px 0 #0A2A80;">\FON_MAK[1].TEST_YELLOW_1_001.MCX</span>
<span style="position:absolute;left:3.7px;top:20.83px;font-size:8px;line-height:8px;font-weight:normal;color:#000;white-space:pre;transform:scaleX(0.8611);transform-origin:0 0;">File</span>
<span style="position:absolute;left:23.7px;top:20.83px;font-size:8px;line-height:8px;font-weight:normal;color:#000;white-space:pre;transform:scaleX(0.8770);transform-origin:0 0;">Edit</span>
<span style="position:absolute;left:45px;top:20.83px;font-size:8px;line-height:8px;font-weight:normal;color:#000;white-space:pre;transform:scaleX(0.8545);transform-origin:0 0;">View</span>
<span style="position:absolute;left:68.8px;top:20.83px;font-size:8px;line-height:8px;font-weight:normal;color:#000;white-space:pre;transform:scaleX(0.9203);transform-origin:0 0;">Analyze</span>
<span style="position:absolute;left:103.8px;top:20.83px;font-size:8px;line-height:8px;font-weight:normal;color:#000;white-space:pre;transform:scaleX(0.9660);transform-origin:0 0;">Create</span>
<span style="position:absolute;left:135.4px;top:20.83px;font-size:8px;line-height:8px;font-weight:normal;color:#000;white-space:pre;transform:scaleX(0.8533);transform-origin:0 0;">Solids</span>
<span style="position:absolute;left:162.5px;top:20.83px;font-size:8px;line-height:8px;font-weight:normal;color:#000;white-space:pre;transform:scaleX(0.9277);transform-origin:0 0;">Xform</span>
<span style="position:absolute;left:190.6px;top:20.83px;font-size:8px;line-height:8px;font-weight:normal;color:#000;white-space:pre;transform:scaleX(0.9341);transform-origin:0 0;">Machine Type</span>
<span style="position:absolute;left:245.8px;top:20.83px;font-size:8px;line-height:8px;font-weight:normal;color:#000;white-space:pre;transform:scaleX(0.9693);transform-origin:0 0;">Toolpaths</span>
<span style="position:absolute;left:287.5px;top:20.83px;font-size:8px;line-height:8px;font-weight:normal;color:#000;white-space:pre;transform:scaleX(0.8794);transform-origin:0 0;">Screen</span>
<span style="position:absolute;left:319.2px;top:20.83px;font-size:8px;line-height:8px;font-weight:normal;color:#000;white-space:pre;transform:scaleX(0.9202);transform-origin:0 0;">Settings</span>
<span style="position:absolute;left:355px;top:20.83px;font-size:8px;line-height:8px;font-weight:normal;color:#000;white-space:pre;transform:scaleX(0.8387);transform-origin:0 0;">Help</span>
<span style="position:absolute;left:8.8px;top:81.73px;font-size:10px;line-height:10px;font-weight:normal;color:#B2AF9E;white-space:pre;transform:scaleX(0.8094);transform-origin:0 0;text-decoration:underline;text-shadow:0.7px 0.7px 0 #fff;">X</span>
<span style="position:absolute;left:25.2px;top:81.96px;font-size:9.5px;line-height:9.5px;font-weight:normal;color:#B2AF9E;white-space:pre;transform:scaleX(0.7773);transform-origin:0 0;text-shadow:0.7px 0.7px 0 #fff;">140.2785</span>
<span style="position:absolute;left:86.4px;top:81.73px;font-size:10px;line-height:10px;font-weight:normal;color:#B2AF9E;white-space:pre;transform:scaleX(0.8244);transform-origin:0 0;text-decoration:underline;text-shadow:0.7px 0.7px 0 #fff;">Y</span>
<span style="position:absolute;left:102.2px;top:81.96px;font-size:9.5px;line-height:9.5px;font-weight:normal;color:#B2AF9E;white-space:pre;transform:scaleX(0.7899);transform-origin:0 0;text-shadow:0.7px 0.7px 0 #fff;">71.82072</span>
<span style="position:absolute;left:163.9px;top:81.73px;font-size:10px;line-height:10px;font-weight:normal;color:#B2AF9E;white-space:pre;transform:scaleX(0.8675);transform-origin:0 0;text-decoration:underline;text-shadow:0.7px 0.7px 0 #fff;">Z</span>
<span style="position:absolute;left:180px;top:81.96px;font-size:9.5px;line-height:9.5px;font-weight:normal;color:#B2AF9E;white-space:pre;transform:scaleX(0.7828);transform-origin:0 0;text-shadow:0.7px 0.7px 0 #fff;">-152.4863</span>
<span style="position:absolute;left:334.5px;top:82.63px;font-size:8px;line-height:8px;font-weight:normal;color:#000;white-space:pre;transform:scaleX(1.1245);transform-origin:0 0;">All...</span>
<span style="position:absolute;left:370px;top:82.63px;font-size:8px;line-height:8px;font-weight:normal;color:#000;white-space:pre;transform:scaleX(0.9542);transform-origin:0 0;">Only...</span>
<span style="position:absolute;left:406.5px;top:82.36px;font-size:9.5px;line-height:9.5px;font-weight:normal;color:#000;white-space:pre;transform:scaleX(0.8441);transform-origin:0 0;">In</span>
<span style="position:absolute;left:131.5px;top:104.63px;font-size:8px;line-height:8px;font-weight:normal;color:#000;white-space:pre;transform:scaleX(0.9493);transform-origin:0 0;">Ribbon Bar</span>
<span style="position:absolute;left:1px;top:508.63px;font-size:8px;line-height:8px;font-weight:normal;color:#000;white-space:pre;transform:scaleX(0.9591);transform-origin:0 0;">For help, press Alt+H.</span>
<span style="position:absolute;left:189.5px;top:508.63px;font-size:8px;line-height:8px;font-weight:normal;color:#000;white-space:pre;transform:scaleX(0.8305);transform-origin:0 0;">3D</span>
<span style="position:absolute;left:211px;top:508.63px;font-size:8px;line-height:8px;font-weight:normal;color:#000;white-space:pre;transform:scaleX(0.8770);transform-origin:0 0;">Gview</span>
<span style="position:absolute;left:241.5px;top:508.63px;font-size:8px;line-height:8px;font-weight:normal;color:#000;white-space:pre;transform:scaleX(0.8378);transform-origin:0 0;">Planes</span>
<span style="position:absolute;left:270px;top:508.63px;font-size:8px;line-height:8px;font-weight:normal;color:#000;white-space:pre;transform:scaleX(0.9143);transform-origin:0 0;">Z:</span>
<span style="position:absolute;left:283px;top:508.63px;font-size:8px;line-height:8px;font-weight:normal;color:#000;white-space:pre;transform:scaleX(1.0408);transform-origin:0 0;">-152.4863</span>
<span style="position:absolute;left:345px;top:508.63px;font-size:8px;line-height:8px;font-weight:normal;color:#000;white-space:pre;transform:scaleX(0.8982);transform-origin:0 0;">10</span>
<span style="position:absolute;left:377.5px;top:508.63px;font-size:8px;line-height:8px;font-weight:normal;color:#000;white-space:pre;transform:scaleX(0.9129);transform-origin:0 0;">Level:</span>
<span style="position:absolute;left:404.5px;top:508.63px;font-size:8px;line-height:8px;font-weight:normal;color:#000;white-space:pre;transform:scaleX(0.6737);transform-origin:0 0;">1</span>
<span style="position:absolute;left:469.5px;top:508.63px;font-size:8px;line-height:8px;font-weight:normal;color:#000;white-space:pre;transform:scaleX(0.9912);transform-origin:0 0;">Attributes</span>
<span style="position:absolute;left:513.5px;top:509.84px;font-size:12px;line-height:12px;font-weight:normal;color:#000;white-space:pre;transform:scaleX(1.1773);transform-origin:0 0;">*</span>
<span style="position:absolute;left:638px;top:508.63px;font-size:8px;line-height:8px;font-weight:normal;color:#000;white-space:pre;transform:scaleX(0.8194);transform-origin:0 0;">WCS</span>
<span style="position:absolute;left:668px;top:508.63px;font-size:8px;line-height:8px;font-weight:normal;color:#000;white-space:pre;transform:scaleX(0.8691);transform-origin:0 0;">Groups</span>
<span style="position:absolute;left:703.8px;top:508.63px;font-size:8px;line-height:8px;font-weight:normal;color:#000;white-space:pre;transform:scaleX(0.8056);transform-origin:0 0;">!</span>
<span style="position:absolute;left:714.5px;top:508.63px;font-size:8px;line-height:8px;font-weight:normal;color:#000;white-space:pre;transform:scaleX(0.8982);transform-origin:0 0;">?</span>
<span style="position:absolute;left:24px;top:523.42px;font-size:12.5px;line-height:12.5px;font-weight:bold;color:#fff;white-space:pre;transform:scaleX(0.9858);transform-origin:0 0;font-style:italic;text-shadow:1px 1px 1px #1A4A1A;">Başlat</span>
<span style="position:absolute;left:170px;top:526.23px;font-size:8px;line-height:8px;font-weight:normal;color:#fff;white-space:pre;transform:scaleX(0.9925);transform-origin:0 0;">Yahoo...</span>
<span style="position:absolute;left:231px;top:526.23px;font-size:8px;line-height:8px;font-weight:normal;color:#fff;white-space:pre;transform:scaleX(1.0603);transform-origin:0 0;">2 Do...</span>
<span style="position:absolute;left:293.7px;top:526.23px;font-size:8px;line-height:8px;font-weight:normal;color:#fff;white-space:pre;transform:scaleX(0.9855);transform-origin:0 0;">33. M...</span>
<span style="position:absolute;left:355px;top:526.23px;font-size:8px;line-height:8px;font-weight:normal;color:#fff;white-space:pre;transform:scaleX(0.9639);transform-origin:0 0;">LimeW...</span>
<span style="position:absolute;left:417px;top:526.23px;font-size:8px;line-height:8px;font-weight:normal;color:#fff;white-space:pre;transform:scaleX(1.0586);transform-origin:0 0;">2 Wi...</span>
<span style="position:absolute;left:479.5px;top:526.23px;font-size:8px;line-height:8px;font-weight:normal;color:#fff;white-space:pre;">Maste...</span>
<span style="position:absolute;left:540.8px;top:526.23px;font-size:8px;line-height:8px;font-weight:normal;color:#fff;white-space:pre;">unal b...</span>
<span style="position:absolute;left:690.8px;top:526.23px;font-size:8px;line-height:8px;font-weight:normal;color:#fff;white-space:pre;transform:scaleX(0.9735);transform-origin:0 0;">13:48</span>
<span style="position:absolute;left:579.5px;top:36.71px;font-size:10.5px;line-height:10.5px;font-weight:bold;color:#F03010;white-space:pre;transform:scaleX(0.8876);transform-origin:0 0;">?</span>
<span style="position:absolute;left:298.2px;top:79.65px;font-size:14px;line-height:14px;font-weight:bold;color:#6C6C9C;white-space:pre;transform:scaleX(0.9810);transform-origin:0 0;text-shadow:0.7px 0.7px 0 #C8C8DC;">?</span>
<span style="position:absolute;left:681.4px;top:79.65px;font-size:14px;line-height:14px;font-weight:bold;color:#6C6C9C;white-space:pre;transform:scaleX(0.9810);transform-origin:0 0;text-shadow:0.7px 0.7px 0 #C8C8DC;">?</span>
<span style="position:absolute;left:138.5px;top:521.03px;font-size:10px;line-height:10px;font-weight:normal;color:#D0E0FF;white-space:pre;transform:scaleX(1.1685);transform-origin:0 0;">»</span>
<span style="position:absolute;left:640.6px;top:524.53px;font-size:10px;line-height:10px;font-weight:bold;color:#fff;white-space:pre;transform:scaleX(0.8989);transform-origin:0 0;">a</span>
</body></html>
